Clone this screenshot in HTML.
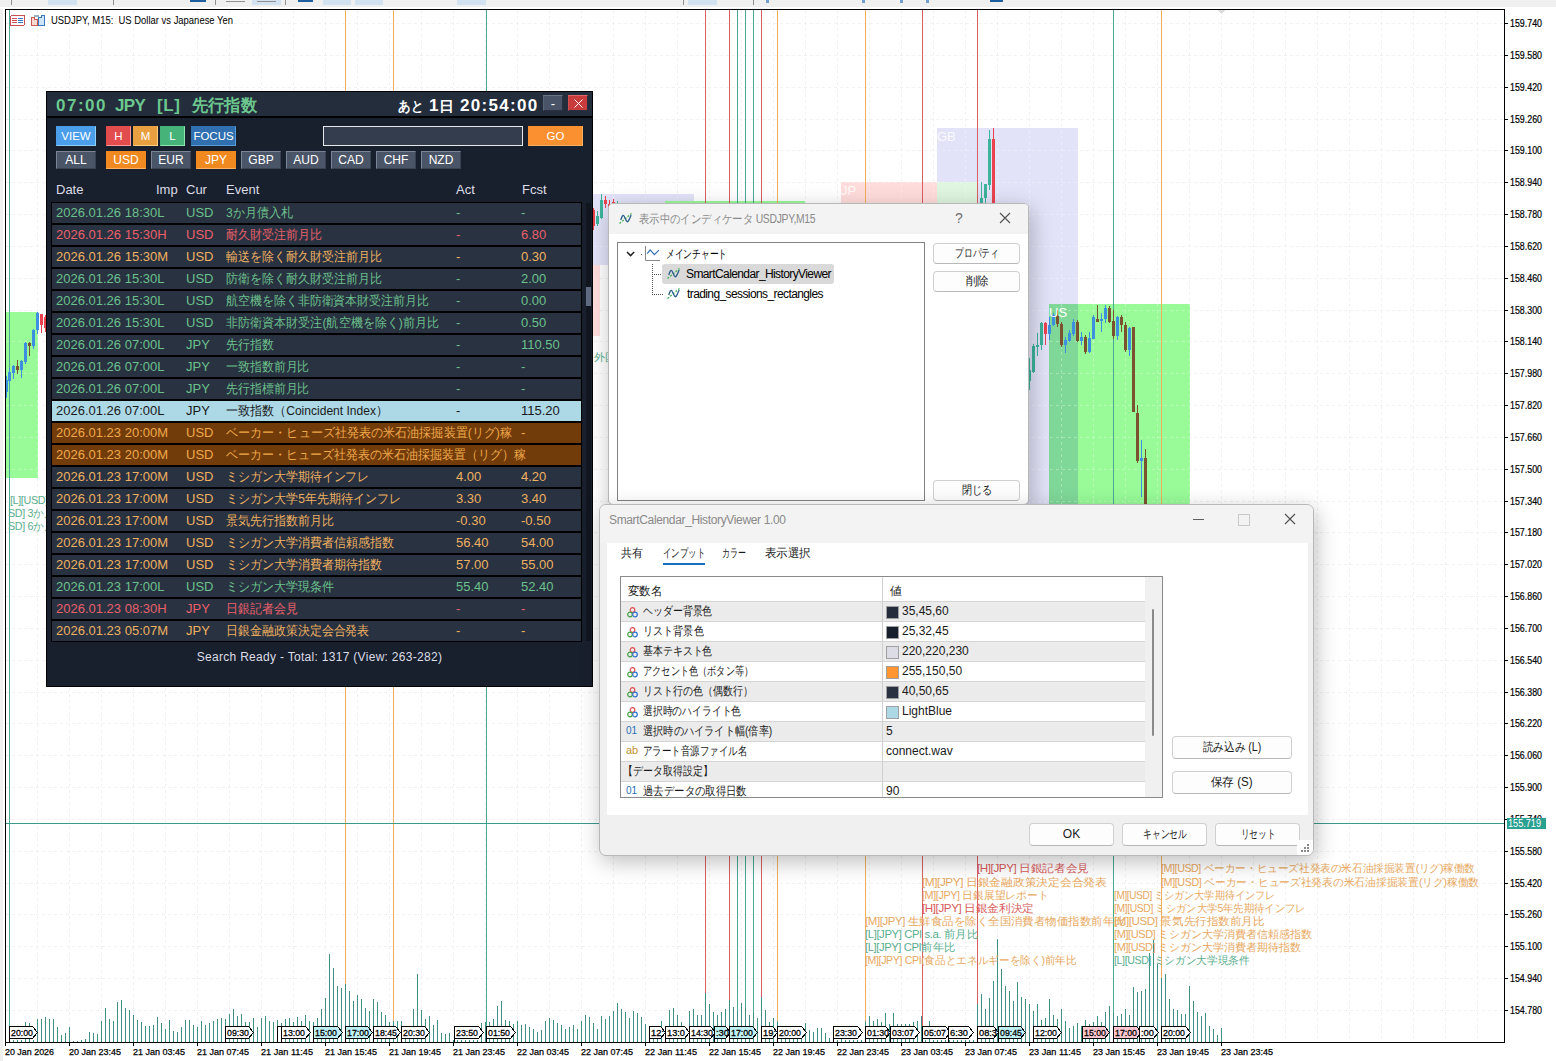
<!DOCTYPE html>
<html><head><meta charset="utf-8"><title>MT5</title><style>
html,body{margin:0;padding:0;width:1556px;height:1061px;overflow:hidden;background:#fff;}
body{position:relative;font-family:"Liberation Sans",sans-serif;}
.abs{position:absolute;}
#chart{position:absolute;left:0;top:0;}
#panel{position:absolute;left:46px;top:91px;width:545px;height:594px;background:#19202d;border:1px solid #000;overflow:hidden;}
#phead{position:absolute;left:0;top:0;width:545px;height:24px;background:#232d3c;border-bottom:2px solid #000;}
.ht{position:absolute;top:3px;font-size:17px;font-weight:bold;white-space:nowrap;line-height:22px;letter-spacing:0.6px;}
.pbtn{position:absolute;color:#fff;font-size:13px;text-align:center;line-height:15px;border-right:1px solid #2a3040;border-bottom:1px solid #2a3040;box-sizing:border-box;}
.btn{position:absolute;box-sizing:border-box;border:1px solid;color:#fff;font-size:11.5px;text-align:center;line-height:18px;white-space:nowrap;}
.cb{width:40px;height:18px;line-height:16px;background:#4b5568;border-color:#7a8598 #3a4252 #3a4252 #7a8598;font-size:12px;}
.sbox{position:absolute;box-sizing:border-box;border:1px solid #e8e8e8;background:#343d4e;}
.colh{position:absolute;top:90px;font-size:13px;color:#dcdce6;line-height:16px;}
.row{position:absolute;left:4px;width:529px;height:20px;border:1px solid #000;font-size:13px;line-height:20px;white-space:nowrap;overflow:hidden;}
.row > span{position:absolute;top:0;}
#sbar{position:absolute;left:539px;top:111px;width:5px;height:438px;background:#11161f;}
#sthumb{position:absolute;left:0;top:84px;width:5px;height:19px;background:#606a80;}
#status{position:absolute;left:0;width:545px;top:557px;text-align:center;font-size:12px;color:#dcdce6;line-height:16px;letter-spacing:0.3px;}
.dlg{position:absolute;box-sizing:border-box;background:#fff;border:1px solid #b8b8b8;border-radius:8px;box-shadow:2px 6px 22px rgba(0,0,0,0.26);overflow:hidden;}
#dlg1{left:608px;top:203px;width:421px;height:302px;border-radius:5px;}
#dlg2{left:599px;top:504px;width:715px;height:352px;background:#f0f0f0;border-radius:7px;}
.dtitle{position:absolute;left:0;top:0;width:100%;background:#f3f3f3;}
.dtt{position:absolute;font-size:12px;color:#8a8a8a;white-space:nowrap;line-height:16px;letter-spacing:-0.35px;}
.dico{position:absolute;line-height:0;}
.tree{position:absolute;box-sizing:border-box;border:1px solid #828282;background:#fff;}
.tt{position:absolute;font-size:12px;color:#000;white-space:nowrap;line-height:16px;letter-spacing:-0.6px;}
.wbtn{position:absolute;box-sizing:border-box;border:1px solid #d0d0d0;border-bottom-color:#b8b8b8;border-radius:4px;background:#fdfdfd;font-size:12px;text-align:center;color:#1a1a1a;white-space:nowrap;}
#dlg1 .wbtn{line-height:18px;}
#dlg2 .wbtn{line-height:21px;}
.tab{position:absolute;top:2px;font-size:12px;color:#1a1a1a;white-space:nowrap;line-height:16px;}
#ptable{position:absolute;left:13px;top:33px;width:543px;height:222px;box-sizing:border-box;border:1px solid #8a8a8a;background:#fff;overflow:hidden;}
.prow{position:absolute;left:0;width:524px;border-top:1px solid #d4d4d4;}
body.cjk .j{letter-spacing:0 !important;-webkit-text-stroke:0 !important;stroke-width:0 !important;}
.pt{font-size:12px;color:#1a1a1a;white-space:nowrap;line-height:19px;top:0;}
</style></head>
<body>
<svg id="chart" width="1556" height="1061" shape-rendering="crispEdges">
<rect x="0" y="0" width="1556" height="7" fill="#f0f0f0"/>
<rect x="0" y="0" width="3" height="1061" fill="#f0f0f0"/>
<rect x="0" y="7" width="1556" height="2" fill="#ffffff"/>
<rect x="48" y="0" width="29" height="5" fill="#d3e2f0"/>
<rect x="252" y="0" width="29" height="5" fill="#d3e2f0"/>
<rect x="323" y="0" width="28" height="5" fill="#d3e2f0"/>
<rect x="355" y="0" width="28" height="5" fill="#d3e2f0"/>
<rect x="457" y="0" width="29" height="5" fill="#d3e2f0"/>
<rect x="688" y="0" width="29" height="5" fill="#d3e2f0"/>
<rect x="11" y="0" width="1" height="5" fill="#909090"/>
<rect x="113" y="0" width="1" height="5" fill="#909090"/>
<rect x="215" y="0" width="1" height="5" fill="#909090"/>
<rect x="285" y="0" width="1" height="5" fill="#909090"/>
<rect x="683" y="0" width="1" height="5" fill="#909090"/>
<rect x="753" y="0" width="1" height="5" fill="#909090"/>
<rect x="190" y="0" width="16" height="2" fill="#1f5fa0"/>
<rect x="298" y="0" width="15" height="2" fill="#1f5fa0"/>
<rect x="990" y="0" width="13" height="2" fill="#1f5fa0"/>
<rect x="862" y="0" width="3" height="3" fill="#3a7ac0" opacity="0.7"/>
<rect x="900" y="0" width="3" height="3" fill="#3a7ac0" opacity="0.7"/>
<rect x="926" y="0" width="3" height="3" fill="#3a7ac0" opacity="0.7"/>
<rect x="766" y="0" width="3" height="3" fill="#3a7ac0" opacity="0.7"/>
<rect x="226" y="1" width="19" height="1" fill="#909090"/>
<rect x="257" y="1" width="19" height="1" fill="#909090"/>
<path d="M37.5 10V1042 M69.5 10V1042 M101.5 10V1042 M133.5 10V1042 M165.5 10V1042 M197.5 10V1042 M229.5 10V1042 M261.5 10V1042 M293.5 10V1042 M325.5 10V1042 M357.5 10V1042 M389.5 10V1042 M421.5 10V1042 M453.5 10V1042 M485.5 10V1042 M517.5 10V1042 M549.5 10V1042 M581.5 10V1042 M613.5 10V1042 M645.5 10V1042 M677.5 10V1042 M709.5 10V1042 M741.5 10V1042 M773.5 10V1042 M805.5 10V1042 M837.5 10V1042 M869.5 10V1042 M901.5 10V1042 M933.5 10V1042 M965.5 10V1042 M997.5 10V1042 M1029.5 10V1042 M1061.5 10V1042 M1093.5 10V1042 M1125.5 10V1042 M1157.5 10V1042 M1189.5 10V1042 M1221.5 10V1042 M1253.5 10V1042 M1285.5 10V1042 M1317.5 10V1042 M1349.5 10V1042 M1381.5 10V1042 M1413.5 10V1042 M1445.5 10V1042 M1477.5 10V1042 M6 23.5H1504 M6 55.5H1504 M6 87.5H1504 M6 119.5H1504 M6 150.5H1504 M6 182.5H1504 M6 214.5H1504 M6 246.5H1504 M6 278.5H1504 M6 310.5H1504 M6 341.5H1504 M6 373.5H1504 M6 405.5H1504 M6 437.5H1504 M6 469.5H1504 M6 501.5H1504 M6 532.5H1504 M6 564.5H1504 M6 596.5H1504 M6 628.5H1504 M6 660.5H1504 M6 692.5H1504 M6 723.5H1504 M6 755.5H1504 M6 787.5H1504 M6 819.5H1504 M6 851.5H1504 M6 883.5H1504 M6 914.5H1504 M6 946.5H1504 M6 978.5H1504 M6 1010.5H1504" stroke="#ebebeb" stroke-width="1" stroke-dasharray="3 3" fill="none"/>
<rect x="6" y="312" width="32" height="166" fill="#98fb98"/>
<rect x="593" y="194" width="101" height="71" fill="#e2e2f8"/>
<rect x="593" y="265" width="7" height="71" fill="#ffdede"/>
<rect x="665" y="201" width="140" height="199" fill="#98fb98"/>
<rect x="841" y="182" width="96" height="238" fill="#ffdcdc"/>
<rect x="937" y="128" width="141" height="572" fill="#e2e2f8"/>
<rect x="937" y="182" width="41" height="238" fill="#dff5df"/>
<rect x="1078" y="304" width="112" height="496" fill="#98fb98"/>
<rect x="1049" y="304" width="29" height="496" fill="#7fd898"/>
<path d="M37.5 10V1042 M69.5 10V1042 M101.5 10V1042 M133.5 10V1042 M165.5 10V1042 M197.5 10V1042 M229.5 10V1042 M261.5 10V1042 M293.5 10V1042 M325.5 10V1042 M357.5 10V1042 M389.5 10V1042 M421.5 10V1042 M453.5 10V1042 M485.5 10V1042 M517.5 10V1042 M549.5 10V1042 M581.5 10V1042 M613.5 10V1042 M645.5 10V1042 M677.5 10V1042 M709.5 10V1042 M741.5 10V1042 M773.5 10V1042 M805.5 10V1042 M837.5 10V1042 M869.5 10V1042 M901.5 10V1042 M933.5 10V1042 M965.5 10V1042 M997.5 10V1042 M1029.5 10V1042 M1061.5 10V1042 M1093.5 10V1042 M1125.5 10V1042 M1157.5 10V1042 M1189.5 10V1042 M1221.5 10V1042 M1253.5 10V1042 M1285.5 10V1042 M1317.5 10V1042 M1349.5 10V1042 M1381.5 10V1042 M1413.5 10V1042 M1445.5 10V1042 M1477.5 10V1042 M6 23.5H1504 M6 55.5H1504 M6 87.5H1504 M6 119.5H1504 M6 150.5H1504 M6 182.5H1504 M6 214.5H1504 M6 246.5H1504 M6 278.5H1504 M6 310.5H1504 M6 341.5H1504 M6 373.5H1504 M6 405.5H1504 M6 437.5H1504 M6 469.5H1504 M6 501.5H1504 M6 532.5H1504 M6 564.5H1504 M6 596.5H1504 M6 628.5H1504 M6 660.5H1504 M6 692.5H1504 M6 723.5H1504 M6 755.5H1504 M6 787.5H1504 M6 819.5H1504 M6 851.5H1504 M6 883.5H1504 M6 914.5H1504 M6 946.5H1504 M6 978.5H1504 M6 1010.5H1504" stroke="#ffffff" stroke-opacity="0.3" stroke-width="1" stroke-dasharray="3 3" fill="none"/>
<rect x="9" y="10" width="1" height="1032" fill="#4aa898"/>
<rect x="345" y="10" width="1" height="1032" fill="#f0b060"/>
<rect x="393" y="10" width="1" height="1032" fill="#f0b060"/>
<rect x="486" y="10" width="1" height="1032" fill="#4aa898"/>
<rect x="705" y="10" width="1" height="1032" fill="#d86060"/>
<rect x="729" y="10" width="1" height="1032" fill="#d86060"/>
<rect x="737" y="10" width="1" height="1032" fill="#4aa898"/>
<rect x="745" y="10" width="1" height="1032" fill="#4aa898"/>
<rect x="753" y="10" width="1" height="1032" fill="#4aa898"/>
<rect x="761" y="10" width="1" height="1032" fill="#d86060"/>
<rect x="777" y="10" width="1" height="1032" fill="#f0b060"/>
<rect x="865" y="10" width="1" height="1032" fill="#f0b060"/>
<rect x="922" y="10" width="1" height="1032" fill="#d86060"/>
<rect x="977" y="10" width="1" height="1032" fill="#d86060"/>
<rect x="1113" y="10" width="1" height="1032" fill="#4aa898"/>
<rect x="1161" y="10" width="1" height="1032" fill="#f0b060"/>
<path d="M13.5 1042V1040 M17.5 1042V1040 M21.5 1042V1040 M25.5 1042V1022 M29.5 1042V1023 M33.5 1042V1040 M37.5 1042V1019 M41.5 1042V1019 M45.5 1042V1017 M49.5 1042V1019 M53.5 1042V1019 M57.5 1042V1027 M61.5 1042V1035 M65.5 1042V1033 M69.5 1042V1027 M73.5 1042V1041 M77.5 1042V1041 M81.5 1042V1040 M85.5 1042V1039 M89.5 1042V1032 M93.5 1042V1033 M97.5 1042V1034 M101.5 1042V1021 M105.5 1042V1008 M109.5 1042V1019 M113.5 1042V1021 M117.5 1042V1002 M121.5 1042V1000 M125.5 1042V1008 M129.5 1042V1010 M133.5 1042V1015 M137.5 1042V1020 M141.5 1042V1022 M145.5 1042V1026 M149.5 1042V1026 M153.5 1042V1025 M157.5 1042V1017 M161.5 1042V1023 M165.5 1042V1029 M169.5 1042V1020 M173.5 1042V1031 M177.5 1042V1032 M181.5 1042V1027 M185.5 1042V1020 M189.5 1042V1020 M193.5 1042V1025 M197.5 1042V1027 M201.5 1042V1021 M205.5 1042V1025 M209.5 1042V1023 M213.5 1042V1021 M217.5 1042V1019 M221.5 1042V1018 M225.5 1042V1019 M229.5 1042V1014 M233.5 1042V1009 M237.5 1042V1016 M241.5 1042V1014 M245.5 1042V1022 M249.5 1042V1022 M253.5 1042V1018 M257.5 1042V1027 M261.5 1042V1018 M265.5 1042V1016 M269.5 1042V1021 M273.5 1042V1022 M277.5 1042V1020 M281.5 1042V1023 M285.5 1042V1019 M289.5 1042V1018 M293.5 1042V1022 M297.5 1042V1017 M301.5 1042V1021 M305.5 1042V1015 M309.5 1042V1021 M313.5 1042V1022 M317.5 1042V1018 M321.5 1042V1009 M325.5 1042V998 M329.5 1042V954 M333.5 1042V968 M337.5 1042V986 M341.5 1042V988 M345.5 1042V984 M349.5 1042V991 M353.5 1042V1001 M357.5 1042V995 M361.5 1042V999 M365.5 1042V1008 M369.5 1042V1011 M373.5 1042V999 M377.5 1042V1002 M381.5 1042V1012 M385.5 1042V1015 M389.5 1042V1022 M393.5 1042V1021 M397.5 1042V1021 M401.5 1042V1021 M405.5 1042V1030 M409.5 1042V1030 M413.5 1042V1009 M417.5 1042V974 M421.5 1042V1010 M425.5 1042V1019 M429.5 1042V1016 M433.5 1042V1025 M437.5 1042V1020 M441.5 1042V1033 M445.5 1042V1034 M449.5 1042V1033 M453.5 1042V1040 M457.5 1042V1040 M461.5 1042V1040 M465.5 1042V1040 M469.5 1042V1040 M473.5 1042V1040 M477.5 1042V1040 M481.5 1042V1023 M485.5 1042V1022 M489.5 1042V1022 M493.5 1042V1019 M497.5 1042V1006 M501.5 1042V1001 M505.5 1042V1020 M509.5 1042V1021 M513.5 1042V1024 M517.5 1042V1021 M521.5 1042V1025 M525.5 1042V1024 M529.5 1042V1027 M533.5 1042V1029 M537.5 1042V1032 M541.5 1042V1030 M545.5 1042V1021 M549.5 1042V1018 M553.5 1042V1020 M557.5 1042V1023 M561.5 1042V1025 M565.5 1042V1029 M569.5 1042V1027 M573.5 1042V1025 M577.5 1042V1029 M581.5 1042V1021 M585.5 1042V1015 M589.5 1042V1017 M593.5 1042V1023 M597.5 1042V1029 M601.5 1042V1016 M605.5 1042V1019 M609.5 1042V1016 M613.5 1042V1011 M617.5 1042V1003 M621.5 1042V1009 M625.5 1042V1012 M629.5 1042V1018 M633.5 1042V1011 M637.5 1042V1013 M641.5 1042V1017 M645.5 1042V1024 M649.5 1042V1030 M653.5 1042V1035 M657.5 1042V1030 M661.5 1042V1021 M665.5 1042V1035 M669.5 1042V1010 M673.5 1042V1008 M677.5 1042V1015 M681.5 1042V1022 M685.5 1042V1035 M689.5 1042V1011 M693.5 1042V1009 M697.5 1042V1015 M701.5 1042V1015 M705.5 1042V993 M709.5 1042V1004 M713.5 1042V1012 M717.5 1042V1015 M721.5 1042V1012 M725.5 1042V1009 M729.5 1042V1000 M733.5 1042V1007 M737.5 1042V1011 M741.5 1042V1003 M745.5 1042V1007 M749.5 1042V1015 M753.5 1042V1013 M757.5 1042V1018 M761.5 1042V997 M765.5 1042V1010 M769.5 1042V1022 M773.5 1042V1018 M777.5 1042V1021 M781.5 1042V1036 M785.5 1042V1038 M789.5 1042V1036 M793.5 1042V1038 M797.5 1042V1037 M801.5 1042V1030 M805.5 1042V1023 M809.5 1042V1030 M813.5 1042V1032 M817.5 1042V1028 M821.5 1042V1028 M825.5 1042V1033 M829.5 1042V1038 M833.5 1042V1040 M837.5 1042V1040 M841.5 1042V1039 M845.5 1042V1040 M849.5 1042V1040 M853.5 1042V1040 M857.5 1042V1040 M861.5 1042V1040 M865.5 1042V1021 M869.5 1042V1016 M873.5 1042V1021 M877.5 1042V1019 M881.5 1042V1022 M885.5 1042V1013 M889.5 1042V1024 M893.5 1042V1013 M897.5 1042V1024 M901.5 1042V1024 M905.5 1042V1024 M909.5 1042V1024 M913.5 1042V1022 M917.5 1042V1021 M921.5 1042V1016 M925.5 1042V1040 M929.5 1042V1021 M933.5 1042V1040 M937.5 1042V1040 M941.5 1042V1040 M945.5 1042V1040 M949.5 1042V1040 M953.5 1042V1040 M957.5 1042V1040 M961.5 1042V1040 M965.5 1042V1040 M969.5 1042V1040 M973.5 1042V1040 M977.5 1042V1004 M981.5 1042V994 M985.5 1042V1009 M989.5 1042V998 M993.5 1042V981 M997.5 1042V939 M1001.5 1042V969 M1005.5 1042V986 M1009.5 1042V991 M1013.5 1042V1001 M1017.5 1042V982 M1021.5 1042V997 M1025.5 1042V999 M1029.5 1042V1004 M1033.5 1042V1011 M1037.5 1042V1004 M1041.5 1042V1020 M1045.5 1042V1018 M1049.5 1042V999 M1053.5 1042V1015 M1057.5 1042V1019 M1061.5 1042V1009 M1065.5 1042V1021 M1069.5 1042V1028 M1073.5 1042V1026 M1077.5 1042V1023 M1081.5 1042V1026 M1085.5 1042V1020 M1089.5 1042V1024 M1093.5 1042V1022 M1097.5 1042V1016 M1101.5 1042V1022 M1105.5 1042V1012 M1109.5 1042V1006 M1113.5 1042V1013 M1117.5 1042V1016 M1121.5 1042V1014 M1125.5 1042V1009 M1129.5 1042V1015 M1133.5 1042V987 M1137.5 1042V992 M1141.5 1042V991 M1145.5 1042V989 M1149.5 1042V953 M1153.5 1042V940 M1157.5 1042V964 M1161.5 1042V978 M1165.5 1042V974 M1169.5 1042V999 M1173.5 1042V1009 M1177.5 1042V1010 M1181.5 1042V1014 M1185.5 1042V1014 M1189.5 1042V986 M1193.5 1042V1001 M1197.5 1042V1012 M1201.5 1042V1016 M1205.5 1042V1013 M1209.5 1042V1026 M1213.5 1042V1029 M1217.5 1042V1035 M1221.5 1042V1028" stroke="#3f8f86" stroke-width="1" fill="none"/>
<rect x="6" y="376" width="1" height="22" fill="#3d8fe0"/>
<rect x="5" y="380" width="3" height="12" fill="#3d8fe0"/>
<rect x="9" y="368" width="1" height="17" fill="#3d8fe0"/>
<rect x="8" y="372" width="3" height="9" fill="#3d8fe0"/>
<rect x="13" y="365" width="1" height="14" fill="#3d8fe0"/>
<rect x="12" y="366" width="3" height="7" fill="#3d8fe0"/>
<rect x="17" y="360" width="1" height="14" fill="#7a5230"/>
<rect x="16" y="366" width="3" height="4" fill="#7a5230"/>
<rect x="21" y="360" width="1" height="18" fill="#3d8fe0"/>
<rect x="20" y="361" width="3" height="9" fill="#3d8fe0"/>
<rect x="25" y="342" width="1" height="22" fill="#3d8fe0"/>
<rect x="24" y="343" width="3" height="19" fill="#3d8fe0"/>
<rect x="29" y="342" width="1" height="14" fill="#7a5230"/>
<rect x="28" y="343" width="3" height="3" fill="#7a5230"/>
<rect x="33" y="329" width="1" height="20" fill="#3d8fe0"/>
<rect x="32" y="330" width="3" height="16" fill="#3d8fe0"/>
<rect x="37" y="312" width="1" height="22" fill="#3d8fe0"/>
<rect x="36" y="313" width="3" height="17" fill="#3d8fe0"/>
<rect x="41" y="314" width="1" height="19" fill="#e8434f"/>
<rect x="40" y="314" width="3" height="11" fill="#e8434f"/>
<rect x="45" y="315" width="1" height="17" fill="#e8434f"/>
<rect x="44" y="317" width="3" height="11" fill="#e8434f"/>
<rect x="593" y="208" width="1" height="22" fill="#e8434f"/>
<rect x="592" y="210" width="3" height="16" fill="#e8434f"/>
<rect x="597" y="211" width="1" height="15" fill="#3cb39a"/>
<rect x="596" y="216" width="3" height="8" fill="#3cb39a"/>
<rect x="601" y="194" width="1" height="25" fill="#3cb39a"/>
<rect x="600" y="200" width="3" height="18" fill="#3cb39a"/>
<rect x="605" y="196" width="1" height="12" fill="#e8434f"/>
<rect x="604" y="200" width="3" height="4" fill="#e8434f"/>
<rect x="609" y="200" width="1" height="9" fill="#e8434f"/>
<rect x="608" y="204" width="3" height="4" fill="#e8434f"/>
<rect x="613" y="199" width="1" height="6" fill="#e8434f"/>
<rect x="612" y="202" width="3" height="2" fill="#e8434f"/>
<rect x="617" y="201" width="1" height="4" fill="#3cb39a"/>
<rect x="616" y="203" width="3" height="1" fill="#3cb39a"/>
<rect x="981" y="182" width="1" height="24" fill="#3cb39a"/>
<rect x="980" y="198" width="3" height="8" fill="#3cb39a"/>
<rect x="985" y="184" width="1" height="22" fill="#3cb39a"/>
<rect x="984" y="184" width="3" height="14" fill="#3cb39a"/>
<rect x="989" y="130" width="1" height="60" fill="#3cb39a"/>
<rect x="988" y="139" width="3" height="46" fill="#3cb39a"/>
<rect x="993" y="128" width="1" height="82" fill="#e8434f"/>
<rect x="992" y="139" width="3" height="71" fill="#e8434f"/>
<rect x="1029" y="358" width="1" height="32" fill="#3cb39a"/>
<rect x="1028" y="370" width="3" height="11" fill="#3cb39a"/>
<rect x="1033" y="344" width="1" height="29" fill="#3cb39a"/>
<rect x="1032" y="346" width="3" height="26" fill="#3cb39a"/>
<rect x="1037" y="333" width="1" height="23" fill="#3cb39a"/>
<rect x="1036" y="345" width="3" height="2" fill="#3cb39a"/>
<rect x="1041" y="322" width="1" height="28" fill="#3cb39a"/>
<rect x="1040" y="323" width="3" height="22" fill="#3cb39a"/>
<rect x="1045" y="322" width="1" height="23" fill="#e8434f"/>
<rect x="1044" y="323" width="3" height="11" fill="#e8434f"/>
<rect x="1049" y="317" width="1" height="23" fill="#3d8fe0"/>
<rect x="1048" y="325" width="3" height="9" fill="#3d8fe0"/>
<rect x="1053" y="313" width="1" height="13" fill="#3d8fe0"/>
<rect x="1052" y="315" width="3" height="10" fill="#3d8fe0"/>
<rect x="1057" y="310" width="1" height="17" fill="#7a5230"/>
<rect x="1056" y="316" width="3" height="8" fill="#7a5230"/>
<rect x="1061" y="322" width="1" height="25" fill="#7a5230"/>
<rect x="1060" y="324" width="3" height="21" fill="#7a5230"/>
<rect x="1065" y="337" width="1" height="16" fill="#3d8fe0"/>
<rect x="1064" y="340" width="3" height="5" fill="#3d8fe0"/>
<rect x="1069" y="330" width="1" height="12" fill="#3d8fe0"/>
<rect x="1068" y="333" width="3" height="8" fill="#3d8fe0"/>
<rect x="1073" y="319" width="1" height="17" fill="#3d8fe0"/>
<rect x="1072" y="322" width="3" height="12" fill="#3d8fe0"/>
<rect x="1077" y="320" width="1" height="22" fill="#7a5230"/>
<rect x="1076" y="322" width="3" height="19" fill="#7a5230"/>
<rect x="1081" y="332" width="1" height="13" fill="#3d8fe0"/>
<rect x="1080" y="337" width="3" height="4" fill="#3d8fe0"/>
<rect x="1085" y="335" width="1" height="19" fill="#7a5230"/>
<rect x="1084" y="337" width="3" height="15" fill="#7a5230"/>
<rect x="1089" y="332" width="1" height="21" fill="#3d8fe0"/>
<rect x="1088" y="338" width="3" height="14" fill="#3d8fe0"/>
<rect x="1093" y="315" width="1" height="24" fill="#3d8fe0"/>
<rect x="1092" y="317" width="3" height="22" fill="#3d8fe0"/>
<rect x="1097" y="305" width="1" height="17" fill="#7a5230"/>
<rect x="1096" y="319" width="3" height="3" fill="#7a5230"/>
<rect x="1101" y="313" width="1" height="19" fill="#3d8fe0"/>
<rect x="1100" y="319" width="3" height="2" fill="#3d8fe0"/>
<rect x="1105" y="305" width="1" height="18" fill="#3d8fe0"/>
<rect x="1104" y="308" width="3" height="11" fill="#3d8fe0"/>
<rect x="1109" y="306" width="1" height="17" fill="#7a5230"/>
<rect x="1108" y="308" width="3" height="14" fill="#7a5230"/>
<rect x="1113" y="310" width="1" height="29" fill="#7a5230"/>
<rect x="1112" y="321" width="3" height="15" fill="#7a5230"/>
<rect x="1117" y="316" width="1" height="24" fill="#3d8fe0"/>
<rect x="1116" y="317" width="3" height="19" fill="#3d8fe0"/>
<rect x="1121" y="315" width="1" height="17" fill="#7a5230"/>
<rect x="1120" y="317" width="3" height="8" fill="#7a5230"/>
<rect x="1125" y="322" width="1" height="30" fill="#7a5230"/>
<rect x="1124" y="325" width="3" height="25" fill="#7a5230"/>
<rect x="1129" y="327" width="1" height="29" fill="#3d8fe0"/>
<rect x="1128" y="328" width="3" height="22" fill="#3d8fe0"/>
<rect x="1133" y="327" width="1" height="85" fill="#7a5230"/>
<rect x="1132" y="327" width="3" height="85" fill="#7a5230"/>
<rect x="1137" y="405" width="1" height="58" fill="#7a5230"/>
<rect x="1136" y="413" width="3" height="48" fill="#7a5230"/>
<rect x="1141" y="440" width="1" height="57" fill="#3d8fe0"/>
<rect x="1140" y="458" width="3" height="3" fill="#3d8fe0"/>
<rect x="1145" y="449" width="1" height="71" fill="#7a5230"/>
<rect x="1144" y="458" width="3" height="62" fill="#7a5230"/>
<text x="937" y="141" font-family='"Liberation Sans", sans-serif' font-size="13" fill="#ffffff" opacity="0.85">GB</text>
<text x="841" y="195" font-family='"Liberation Sans", sans-serif' font-size="13" fill="#ffffff" opacity="0.85">JP</text>
<text x="1049" y="317" font-family='"Liberation Sans", sans-serif' font-size="13" fill="#ffffff">US</text>
<rect x="5" y="823" width="1499" height="1" fill="#3a9a8c"/>
<rect x="5.5" y="9.5" width="1499" height="1033" fill="none" stroke="#000" stroke-width="1"/>
<rect x="1504" y="23" width="4" height="1" fill="#000"/>
<text x="1510" y="27" font-family='"Liberation Sans", sans-serif' font-size="10" fill="#000" textLength="32" lengthAdjust="spacingAndGlyphs" stroke="#000" stroke-width="0.2">159.740</text>
<rect x="1504" y="55" width="4" height="1" fill="#000"/>
<text x="1510" y="59" font-family='"Liberation Sans", sans-serif' font-size="10" fill="#000" textLength="32" lengthAdjust="spacingAndGlyphs" stroke="#000" stroke-width="0.2">159.580</text>
<rect x="1504" y="87" width="4" height="1" fill="#000"/>
<text x="1510" y="91" font-family='"Liberation Sans", sans-serif' font-size="10" fill="#000" textLength="32" lengthAdjust="spacingAndGlyphs" stroke="#000" stroke-width="0.2">159.420</text>
<rect x="1504" y="119" width="4" height="1" fill="#000"/>
<text x="1510" y="123" font-family='"Liberation Sans", sans-serif' font-size="10" fill="#000" textLength="32" lengthAdjust="spacingAndGlyphs" stroke="#000" stroke-width="0.2">159.260</text>
<rect x="1504" y="150" width="4" height="1" fill="#000"/>
<text x="1510" y="154" font-family='"Liberation Sans", sans-serif' font-size="10" fill="#000" textLength="32" lengthAdjust="spacingAndGlyphs" stroke="#000" stroke-width="0.2">159.100</text>
<rect x="1504" y="182" width="4" height="1" fill="#000"/>
<text x="1510" y="186" font-family='"Liberation Sans", sans-serif' font-size="10" fill="#000" textLength="32" lengthAdjust="spacingAndGlyphs" stroke="#000" stroke-width="0.2">158.940</text>
<rect x="1504" y="214" width="4" height="1" fill="#000"/>
<text x="1510" y="218" font-family='"Liberation Sans", sans-serif' font-size="10" fill="#000" textLength="32" lengthAdjust="spacingAndGlyphs" stroke="#000" stroke-width="0.2">158.780</text>
<rect x="1504" y="246" width="4" height="1" fill="#000"/>
<text x="1510" y="250" font-family='"Liberation Sans", sans-serif' font-size="10" fill="#000" textLength="32" lengthAdjust="spacingAndGlyphs" stroke="#000" stroke-width="0.2">158.620</text>
<rect x="1504" y="278" width="4" height="1" fill="#000"/>
<text x="1510" y="282" font-family='"Liberation Sans", sans-serif' font-size="10" fill="#000" textLength="32" lengthAdjust="spacingAndGlyphs" stroke="#000" stroke-width="0.2">158.460</text>
<rect x="1504" y="310" width="4" height="1" fill="#000"/>
<text x="1510" y="314" font-family='"Liberation Sans", sans-serif' font-size="10" fill="#000" textLength="32" lengthAdjust="spacingAndGlyphs" stroke="#000" stroke-width="0.2">158.300</text>
<rect x="1504" y="341" width="4" height="1" fill="#000"/>
<text x="1510" y="345" font-family='"Liberation Sans", sans-serif' font-size="10" fill="#000" textLength="32" lengthAdjust="spacingAndGlyphs" stroke="#000" stroke-width="0.2">158.140</text>
<rect x="1504" y="373" width="4" height="1" fill="#000"/>
<text x="1510" y="377" font-family='"Liberation Sans", sans-serif' font-size="10" fill="#000" textLength="32" lengthAdjust="spacingAndGlyphs" stroke="#000" stroke-width="0.2">157.980</text>
<rect x="1504" y="405" width="4" height="1" fill="#000"/>
<text x="1510" y="409" font-family='"Liberation Sans", sans-serif' font-size="10" fill="#000" textLength="32" lengthAdjust="spacingAndGlyphs" stroke="#000" stroke-width="0.2">157.820</text>
<rect x="1504" y="437" width="4" height="1" fill="#000"/>
<text x="1510" y="441" font-family='"Liberation Sans", sans-serif' font-size="10" fill="#000" textLength="32" lengthAdjust="spacingAndGlyphs" stroke="#000" stroke-width="0.2">157.660</text>
<rect x="1504" y="469" width="4" height="1" fill="#000"/>
<text x="1510" y="473" font-family='"Liberation Sans", sans-serif' font-size="10" fill="#000" textLength="32" lengthAdjust="spacingAndGlyphs" stroke="#000" stroke-width="0.2">157.500</text>
<rect x="1504" y="501" width="4" height="1" fill="#000"/>
<text x="1510" y="505" font-family='"Liberation Sans", sans-serif' font-size="10" fill="#000" textLength="32" lengthAdjust="spacingAndGlyphs" stroke="#000" stroke-width="0.2">157.340</text>
<rect x="1504" y="532" width="4" height="1" fill="#000"/>
<text x="1510" y="536" font-family='"Liberation Sans", sans-serif' font-size="10" fill="#000" textLength="32" lengthAdjust="spacingAndGlyphs" stroke="#000" stroke-width="0.2">157.180</text>
<rect x="1504" y="564" width="4" height="1" fill="#000"/>
<text x="1510" y="568" font-family='"Liberation Sans", sans-serif' font-size="10" fill="#000" textLength="32" lengthAdjust="spacingAndGlyphs" stroke="#000" stroke-width="0.2">157.020</text>
<rect x="1504" y="596" width="4" height="1" fill="#000"/>
<text x="1510" y="600" font-family='"Liberation Sans", sans-serif' font-size="10" fill="#000" textLength="32" lengthAdjust="spacingAndGlyphs" stroke="#000" stroke-width="0.2">156.860</text>
<rect x="1504" y="628" width="4" height="1" fill="#000"/>
<text x="1510" y="632" font-family='"Liberation Sans", sans-serif' font-size="10" fill="#000" textLength="32" lengthAdjust="spacingAndGlyphs" stroke="#000" stroke-width="0.2">156.700</text>
<rect x="1504" y="660" width="4" height="1" fill="#000"/>
<text x="1510" y="664" font-family='"Liberation Sans", sans-serif' font-size="10" fill="#000" textLength="32" lengthAdjust="spacingAndGlyphs" stroke="#000" stroke-width="0.2">156.540</text>
<rect x="1504" y="692" width="4" height="1" fill="#000"/>
<text x="1510" y="696" font-family='"Liberation Sans", sans-serif' font-size="10" fill="#000" textLength="32" lengthAdjust="spacingAndGlyphs" stroke="#000" stroke-width="0.2">156.380</text>
<rect x="1504" y="723" width="4" height="1" fill="#000"/>
<text x="1510" y="727" font-family='"Liberation Sans", sans-serif' font-size="10" fill="#000" textLength="32" lengthAdjust="spacingAndGlyphs" stroke="#000" stroke-width="0.2">156.220</text>
<rect x="1504" y="755" width="4" height="1" fill="#000"/>
<text x="1510" y="759" font-family='"Liberation Sans", sans-serif' font-size="10" fill="#000" textLength="32" lengthAdjust="spacingAndGlyphs" stroke="#000" stroke-width="0.2">156.060</text>
<rect x="1504" y="787" width="4" height="1" fill="#000"/>
<text x="1510" y="791" font-family='"Liberation Sans", sans-serif' font-size="10" fill="#000" textLength="32" lengthAdjust="spacingAndGlyphs" stroke="#000" stroke-width="0.2">155.900</text>
<rect x="1504" y="819" width="4" height="1" fill="#000"/>
<text x="1510" y="823" font-family='"Liberation Sans", sans-serif' font-size="10" fill="#000" textLength="32" lengthAdjust="spacingAndGlyphs" stroke="#000" stroke-width="0.2">155.740</text>
<rect x="1504" y="851" width="4" height="1" fill="#000"/>
<text x="1510" y="855" font-family='"Liberation Sans", sans-serif' font-size="10" fill="#000" textLength="32" lengthAdjust="spacingAndGlyphs" stroke="#000" stroke-width="0.2">155.580</text>
<rect x="1504" y="883" width="4" height="1" fill="#000"/>
<text x="1510" y="887" font-family='"Liberation Sans", sans-serif' font-size="10" fill="#000" textLength="32" lengthAdjust="spacingAndGlyphs" stroke="#000" stroke-width="0.2">155.420</text>
<rect x="1504" y="914" width="4" height="1" fill="#000"/>
<text x="1510" y="918" font-family='"Liberation Sans", sans-serif' font-size="10" fill="#000" textLength="32" lengthAdjust="spacingAndGlyphs" stroke="#000" stroke-width="0.2">155.260</text>
<rect x="1504" y="946" width="4" height="1" fill="#000"/>
<text x="1510" y="950" font-family='"Liberation Sans", sans-serif' font-size="10" fill="#000" textLength="32" lengthAdjust="spacingAndGlyphs" stroke="#000" stroke-width="0.2">155.100</text>
<rect x="1504" y="978" width="4" height="1" fill="#000"/>
<text x="1510" y="982" font-family='"Liberation Sans", sans-serif' font-size="10" fill="#000" textLength="32" lengthAdjust="spacingAndGlyphs" stroke="#000" stroke-width="0.2">154.940</text>
<rect x="1504" y="1010" width="4" height="1" fill="#000"/>
<text x="1510" y="1014" font-family='"Liberation Sans", sans-serif' font-size="10" fill="#000" textLength="32" lengthAdjust="spacingAndGlyphs" stroke="#000" stroke-width="0.2">154.780</text>
<rect x="1507" y="818" width="39" height="11" fill="#2aa090"/>
<text x="1508" y="827" font-family='"Liberation Sans", sans-serif' font-size="10" fill="#fff" textLength="33" lengthAdjust="spacingAndGlyphs">155.719</text>
<rect x="5" y="1042" width="1" height="4" fill="#000"/>
<text x="5" y="1055" font-family='"Liberation Sans", sans-serif' font-size="9.5" fill="#000" textLength="49" lengthAdjust="spacingAndGlyphs" stroke="#000" stroke-width="0.25">20 Jan 2026</text>
<rect x="69" y="1042" width="1" height="4" fill="#000"/>
<text x="69" y="1055" font-family='"Liberation Sans", sans-serif' font-size="9.5" fill="#000" textLength="52" lengthAdjust="spacingAndGlyphs" stroke="#000" stroke-width="0.25">20 Jan 23:45</text>
<rect x="133" y="1042" width="1" height="4" fill="#000"/>
<text x="133" y="1055" font-family='"Liberation Sans", sans-serif' font-size="9.5" fill="#000" textLength="52" lengthAdjust="spacingAndGlyphs" stroke="#000" stroke-width="0.25">21 Jan 03:45</text>
<rect x="197" y="1042" width="1" height="4" fill="#000"/>
<text x="197" y="1055" font-family='"Liberation Sans", sans-serif' font-size="9.5" fill="#000" textLength="52" lengthAdjust="spacingAndGlyphs" stroke="#000" stroke-width="0.25">21 Jan 07:45</text>
<rect x="261" y="1042" width="1" height="4" fill="#000"/>
<text x="261" y="1055" font-family='"Liberation Sans", sans-serif' font-size="9.5" fill="#000" textLength="52" lengthAdjust="spacingAndGlyphs" stroke="#000" stroke-width="0.25">21 Jan 11:45</text>
<rect x="325" y="1042" width="1" height="4" fill="#000"/>
<text x="325" y="1055" font-family='"Liberation Sans", sans-serif' font-size="9.5" fill="#000" textLength="52" lengthAdjust="spacingAndGlyphs" stroke="#000" stroke-width="0.25">21 Jan 15:45</text>
<rect x="389" y="1042" width="1" height="4" fill="#000"/>
<text x="389" y="1055" font-family='"Liberation Sans", sans-serif' font-size="9.5" fill="#000" textLength="52" lengthAdjust="spacingAndGlyphs" stroke="#000" stroke-width="0.25">21 Jan 19:45</text>
<rect x="453" y="1042" width="1" height="4" fill="#000"/>
<text x="453" y="1055" font-family='"Liberation Sans", sans-serif' font-size="9.5" fill="#000" textLength="52" lengthAdjust="spacingAndGlyphs" stroke="#000" stroke-width="0.25">21 Jan 23:45</text>
<rect x="517" y="1042" width="1" height="4" fill="#000"/>
<text x="517" y="1055" font-family='"Liberation Sans", sans-serif' font-size="9.5" fill="#000" textLength="52" lengthAdjust="spacingAndGlyphs" stroke="#000" stroke-width="0.25">22 Jan 03:45</text>
<rect x="581" y="1042" width="1" height="4" fill="#000"/>
<text x="581" y="1055" font-family='"Liberation Sans", sans-serif' font-size="9.5" fill="#000" textLength="52" lengthAdjust="spacingAndGlyphs" stroke="#000" stroke-width="0.25">22 Jan 07:45</text>
<rect x="645" y="1042" width="1" height="4" fill="#000"/>
<text x="645" y="1055" font-family='"Liberation Sans", sans-serif' font-size="9.5" fill="#000" textLength="52" lengthAdjust="spacingAndGlyphs" stroke="#000" stroke-width="0.25">22 Jan 11:45</text>
<rect x="709" y="1042" width="1" height="4" fill="#000"/>
<text x="709" y="1055" font-family='"Liberation Sans", sans-serif' font-size="9.5" fill="#000" textLength="52" lengthAdjust="spacingAndGlyphs" stroke="#000" stroke-width="0.25">22 Jan 15:45</text>
<rect x="773" y="1042" width="1" height="4" fill="#000"/>
<text x="773" y="1055" font-family='"Liberation Sans", sans-serif' font-size="9.5" fill="#000" textLength="52" lengthAdjust="spacingAndGlyphs" stroke="#000" stroke-width="0.25">22 Jan 19:45</text>
<rect x="837" y="1042" width="1" height="4" fill="#000"/>
<text x="837" y="1055" font-family='"Liberation Sans", sans-serif' font-size="9.5" fill="#000" textLength="52" lengthAdjust="spacingAndGlyphs" stroke="#000" stroke-width="0.25">22 Jan 23:45</text>
<rect x="901" y="1042" width="1" height="4" fill="#000"/>
<text x="901" y="1055" font-family='"Liberation Sans", sans-serif' font-size="9.5" fill="#000" textLength="52" lengthAdjust="spacingAndGlyphs" stroke="#000" stroke-width="0.25">23 Jan 03:45</text>
<rect x="965" y="1042" width="1" height="4" fill="#000"/>
<text x="965" y="1055" font-family='"Liberation Sans", sans-serif' font-size="9.5" fill="#000" textLength="52" lengthAdjust="spacingAndGlyphs" stroke="#000" stroke-width="0.25">23 Jan 07:45</text>
<rect x="1029" y="1042" width="1" height="4" fill="#000"/>
<text x="1029" y="1055" font-family='"Liberation Sans", sans-serif' font-size="9.5" fill="#000" textLength="52" lengthAdjust="spacingAndGlyphs" stroke="#000" stroke-width="0.25">23 Jan 11:45</text>
<rect x="1093" y="1042" width="1" height="4" fill="#000"/>
<text x="1093" y="1055" font-family='"Liberation Sans", sans-serif' font-size="9.5" fill="#000" textLength="52" lengthAdjust="spacingAndGlyphs" stroke="#000" stroke-width="0.25">23 Jan 15:45</text>
<rect x="1157" y="1042" width="1" height="4" fill="#000"/>
<text x="1157" y="1055" font-family='"Liberation Sans", sans-serif' font-size="9.5" fill="#000" textLength="52" lengthAdjust="spacingAndGlyphs" stroke="#000" stroke-width="0.25">23 Jan 19:45</text>
<rect x="1221" y="1042" width="1" height="4" fill="#000"/>
<text x="1221" y="1055" font-family='"Liberation Sans", sans-serif' font-size="9.5" fill="#000" textLength="52" lengthAdjust="spacingAndGlyphs" stroke="#000" stroke-width="0.25">23 Jan 23:45</text>
<path d="M1217 10 L1225 10 L1221 14 Z" fill="#dcdcdc"/>
<path d="M9.5 1042 V1026.5 H32.5 L37.5 1032.5 L32.5 1038.5 H9.5" fill="#fff" stroke="#000" stroke-width="1"/>
<text x="11" y="1036" font-family='"Liberation Sans", sans-serif' font-size="9.5" fill="#000" textLength="22" lengthAdjust="spacingAndGlyphs" stroke="#000" stroke-width="0.3">20:00</text>
<path d="M225.5 1042 V1026.5 H248.5 L253.5 1032.5 L248.5 1038.5 H225.5" fill="#fff" stroke="#000" stroke-width="1"/>
<text x="227" y="1036" font-family='"Liberation Sans", sans-serif' font-size="9.5" fill="#000" textLength="22" lengthAdjust="spacingAndGlyphs" stroke="#000" stroke-width="0.3">09:30</text>
<path d="M280.5 1026.5H277.5V1042" stroke="#000" fill="none"/>
<path d="M281.5 1042 V1026.5 H305.5 L310.5 1032.5 L305.5 1038.5 H281.5" fill="#fff" stroke="#000" stroke-width="1"/>
<text x="283" y="1036" font-family='"Liberation Sans", sans-serif' font-size="9.5" fill="#000" textLength="22" lengthAdjust="spacingAndGlyphs" stroke="#000" stroke-width="0.3">13:00</text>
<path d="M313.5 1042 V1026.5 H337.5 L342.5 1032.5 L337.5 1038.5 H313.5" fill="#bff0f4" stroke="#000" stroke-width="1"/>
<text x="315" y="1036" font-family='"Liberation Sans", sans-serif' font-size="9.5" fill="#000" textLength="22" lengthAdjust="spacingAndGlyphs" stroke="#000" stroke-width="0.3">15:00</text>
<path d="M345.5 1042 V1026.5 H367.5 L372.5 1032.5 L367.5 1038.5 H345.5" fill="#bff0f4" stroke="#000" stroke-width="1"/>
<text x="347" y="1036" font-family='"Liberation Sans", sans-serif' font-size="9.5" fill="#000" textLength="22" lengthAdjust="spacingAndGlyphs" stroke="#000" stroke-width="0.3">17:00</text>
<path d="M373.5 1042 V1026.5 H395.5 L400.5 1032.5 L395.5 1038.5 H373.5" fill="#fff" stroke="#000" stroke-width="1"/>
<text x="375" y="1036" font-family='"Liberation Sans", sans-serif' font-size="9.5" fill="#000" textLength="22" lengthAdjust="spacingAndGlyphs" stroke="#000" stroke-width="0.3">18:45</text>
<path d="M401.5 1042 V1026.5 H424.5 L429.5 1032.5 L424.5 1038.5 H401.5" fill="#fff" stroke="#000" stroke-width="1"/>
<text x="403" y="1036" font-family='"Liberation Sans", sans-serif' font-size="9.5" fill="#000" textLength="22" lengthAdjust="spacingAndGlyphs" stroke="#000" stroke-width="0.3">20:30</text>
<path d="M454.5 1042 V1026.5 H478.5 L483.5 1032.5 L478.5 1038.5 H454.5" fill="#fff" stroke="#000" stroke-width="1"/>
<text x="456" y="1036" font-family='"Liberation Sans", sans-serif' font-size="9.5" fill="#000" textLength="22" lengthAdjust="spacingAndGlyphs" stroke="#000" stroke-width="0.3">23:50</text>
<path d="M486.5 1042 V1026.5 H510.5 L515.5 1032.5 L510.5 1038.5 H486.5" fill="#fff" stroke="#000" stroke-width="1"/>
<text x="488" y="1036" font-family='"Liberation Sans", sans-serif' font-size="9.5" fill="#000" textLength="22" lengthAdjust="spacingAndGlyphs" stroke="#000" stroke-width="0.3">01:50</text>
<path d="M649.5 1042 V1026.5 H660.5 L665.5 1032.5 L660.5 1038.5 H649.5" fill="#fff" stroke="#000" stroke-width="1"/>
<text x="651" y="1036" font-family='"Liberation Sans", sans-serif' font-size="9.5" fill="#000" textLength="13" lengthAdjust="spacingAndGlyphs" stroke="#000" stroke-width="0.3">12:</text>
<path d="M665.5 1042 V1026.5 H684.5 L689.5 1032.5 L684.5 1038.5 H665.5" fill="#fff" stroke="#000" stroke-width="1"/>
<text x="667" y="1036" font-family='"Liberation Sans", sans-serif' font-size="9.5" fill="#000" textLength="18" lengthAdjust="spacingAndGlyphs" stroke="#000" stroke-width="0.3">13:0</text>
<path d="M689.5 1042 V1026.5 H710.5 L715.5 1032.5 L710.5 1038.5 H689.5" fill="#fff" stroke="#000" stroke-width="1"/>
<text x="691" y="1036" font-family='"Liberation Sans", sans-serif' font-size="9.5" fill="#000" textLength="22" lengthAdjust="spacingAndGlyphs" stroke="#000" stroke-width="0.3">14:30</text>
<path d="M714.5 1042 V1026.5 H725.5 L730.5 1032.5 L725.5 1038.5 H714.5" fill="#bff0f4" stroke="#000" stroke-width="1"/>
<text x="716" y="1036" font-family='"Liberation Sans", sans-serif' font-size="9.5" fill="#000" textLength="13" lengthAdjust="spacingAndGlyphs" stroke="#000" stroke-width="0.3">:30</text>
<path d="M729.5 1042 V1026.5 H752.5 L757.5 1032.5 L752.5 1038.5 H729.5" fill="#bff0f4" stroke="#000" stroke-width="1"/>
<text x="731" y="1036" font-family='"Liberation Sans", sans-serif' font-size="9.5" fill="#000" textLength="22" lengthAdjust="spacingAndGlyphs" stroke="#000" stroke-width="0.3">17:00</text>
<path d="M761.5 1042 V1026.5 H772.5 L777.5 1032.5 L772.5 1038.5 H761.5" fill="#fff" stroke="#000" stroke-width="1"/>
<text x="763" y="1036" font-family='"Liberation Sans", sans-serif' font-size="9.5" fill="#000" textLength="13" lengthAdjust="spacingAndGlyphs" stroke="#000" stroke-width="0.3">19:</text>
<path d="M777.5 1042 V1026.5 H801.5 L806.5 1032.5 L801.5 1038.5 H777.5" fill="#fff" stroke="#000" stroke-width="1"/>
<text x="779" y="1036" font-family='"Liberation Sans", sans-serif' font-size="9.5" fill="#000" textLength="22" lengthAdjust="spacingAndGlyphs" stroke="#000" stroke-width="0.3">20:00</text>
<path d="M833.5 1042 V1026.5 H857.5 L862.5 1032.5 L857.5 1038.5 H833.5" fill="#fff" stroke="#000" stroke-width="1"/>
<text x="835" y="1036" font-family='"Liberation Sans", sans-serif' font-size="9.5" fill="#000" textLength="22" lengthAdjust="spacingAndGlyphs" stroke="#000" stroke-width="0.3">23:30</text>
<path d="M865.5 1042 V1026.5 H885.5 L890.5 1032.5 L885.5 1038.5 H865.5" fill="#fff" stroke="#000" stroke-width="1"/>
<text x="867" y="1036" font-family='"Liberation Sans", sans-serif' font-size="9.5" fill="#000" textLength="22" lengthAdjust="spacingAndGlyphs" stroke="#000" stroke-width="0.3">01:30</text>
<path d="M890.5 1042 V1026.5 H914.5 L919.5 1032.5 L914.5 1038.5 H890.5" fill="#fff" stroke="#000" stroke-width="1"/>
<text x="892" y="1036" font-family='"Liberation Sans", sans-serif' font-size="9.5" fill="#000" textLength="22" lengthAdjust="spacingAndGlyphs" stroke="#000" stroke-width="0.3">03:07</text>
<path d="M922.5 1042 V1026.5 H945.5 L950.5 1032.5 L945.5 1038.5 H922.5" fill="#fff" stroke="#000" stroke-width="1"/>
<text x="924" y="1036" font-family='"Liberation Sans", sans-serif' font-size="9.5" fill="#000" textLength="22" lengthAdjust="spacingAndGlyphs" stroke="#000" stroke-width="0.3">05:07</text>
<path d="M948.5 1042 V1026.5 H968.5 L973.5 1032.5 L968.5 1038.5 H948.5" fill="#fff" stroke="#000" stroke-width="1"/>
<text x="950" y="1036" font-family='"Liberation Sans", sans-serif' font-size="9.5" fill="#000" textLength="18" lengthAdjust="spacingAndGlyphs" stroke="#000" stroke-width="0.3">6:30</text>
<path d="M977.5 1042 V1026.5 H993.5 L998.5 1032.5 L993.5 1038.5 H977.5" fill="#fff" stroke="#000" stroke-width="1"/>
<text x="979" y="1036" font-family='"Liberation Sans", sans-serif' font-size="9.5" fill="#000" textLength="18" lengthAdjust="spacingAndGlyphs" stroke="#000" stroke-width="0.3">08:3</text>
<path d="M998.5 1042 V1026.5 H1020.5 L1025.5 1032.5 L1020.5 1038.5 H998.5" fill="#bff0f4" stroke="#000" stroke-width="1"/>
<text x="1000" y="1036" font-family='"Liberation Sans", sans-serif' font-size="9.5" fill="#000" textLength="22" lengthAdjust="spacingAndGlyphs" stroke="#000" stroke-width="0.3">09:45</text>
<path d="M1033.5 1042 V1026.5 H1056.5 L1061.5 1032.5 L1056.5 1038.5 H1033.5" fill="#fff" stroke="#000" stroke-width="1"/>
<text x="1035" y="1036" font-family='"Liberation Sans", sans-serif' font-size="9.5" fill="#000" textLength="22" lengthAdjust="spacingAndGlyphs" stroke="#000" stroke-width="0.3">12:00</text>
<path d="M1082.5 1042 V1026.5 H1104.5 L1109.5 1032.5 L1104.5 1038.5 H1082.5" fill="#ffc8d0" stroke="#000" stroke-width="1"/>
<text x="1084" y="1036" font-family='"Liberation Sans", sans-serif' font-size="9.5" fill="#000" textLength="22" lengthAdjust="spacingAndGlyphs" stroke="#000" stroke-width="0.3">15:00</text>
<path d="M1113.5 1042 V1026.5 H1136.5 L1141.5 1032.5 L1136.5 1038.5 H1113.5" fill="#ffc8d0" stroke="#000" stroke-width="1"/>
<text x="1115" y="1036" font-family='"Liberation Sans", sans-serif' font-size="9.5" fill="#000" textLength="22" lengthAdjust="spacingAndGlyphs" stroke="#000" stroke-width="0.3">17:00</text>
<path d="M1139.5 1042 V1026.5 H1153.5 L1158.5 1032.5 L1153.5 1038.5 H1139.5" fill="#fff" stroke="#000" stroke-width="1"/>
<text x="1141" y="1036" font-family='"Liberation Sans", sans-serif' font-size="9.5" fill="#000" textLength="13" lengthAdjust="spacingAndGlyphs" stroke="#000" stroke-width="0.3">:00</text>
<path d="M1161.5 1042 V1026.5 H1185.5 L1190.5 1032.5 L1185.5 1038.5 H1161.5" fill="#fff" stroke="#000" stroke-width="1"/>
<text x="1163" y="1036" font-family='"Liberation Sans", sans-serif' font-size="9.5" fill="#000" textLength="22" lengthAdjust="spacingAndGlyphs" stroke="#000" stroke-width="0.3">20:00</text>
<text class="fitsvg" x="977" y="872" font-family='"Liberation Sans", sans-serif' font-size="11" fill="#d85a5a" style="letter-spacing:-0.4px" textLength="112.00" lengthAdjust="spacingAndGlyphs">[H][JPY] <tspan class="j" style="letter-spacing:3.2px" stroke="#d85a5a" stroke-width="0.45">日銀記者会見</tspan></text>
<text class="fitsvg" x="922" y="886" font-family='"Liberation Sans", sans-serif' font-size="11" fill="#e8a860" style="letter-spacing:-0.4px" textLength="185.00" lengthAdjust="spacingAndGlyphs">[M][JPY] <tspan class="j" style="letter-spacing:3.2px" stroke="#e8a860" stroke-width="0.45">日銀金融政策決定会合発表</tspan></text>
<text class="fitsvg" x="922" y="899" font-family='"Liberation Sans", sans-serif' font-size="11" fill="#e8a860" style="letter-spacing:-0.4px" textLength="126.60" lengthAdjust="spacingAndGlyphs">[M][JPY] <tspan class="j" style="letter-spacing:3.2px" stroke="#e8a860" stroke-width="0.45">日銀展望</tspan><tspan class="j" style="letter-spacing:1.0px" stroke="#e8a860" stroke-width="0.45">レポート</tspan></text>
<text class="fitsvg" x="922" y="912" font-family='"Liberation Sans", sans-serif' font-size="11" fill="#d85a5a" style="letter-spacing:-0.4px" textLength="112.00" lengthAdjust="spacingAndGlyphs">[H][JPY] <tspan class="j" style="letter-spacing:3.2px" stroke="#d85a5a" stroke-width="0.45">日銀金利決定</tspan></text>
<text class="fitsvg" x="865" y="925" font-family='"Liberation Sans", sans-serif' font-size="11" fill="#e8a860" style="letter-spacing:-0.4px" textLength="260.70" lengthAdjust="spacingAndGlyphs">[M][JPY] <tspan class="j" style="letter-spacing:3.2px" stroke="#e8a860" stroke-width="0.45">生鮮食品</tspan><tspan class="j" style="letter-spacing:1.0px" stroke="#e8a860" stroke-width="0.45">を</tspan><tspan class="j" style="letter-spacing:3.2px" stroke="#e8a860" stroke-width="0.45">除</tspan><tspan class="j" style="letter-spacing:1.0px" stroke="#e8a860" stroke-width="0.45">く</tspan><tspan class="j" style="letter-spacing:3.2px" stroke="#e8a860" stroke-width="0.45">全国消費者物価指数前年比</tspan></text>
<text class="fitsvg" x="865" y="938" font-family='"Liberation Sans", sans-serif' font-size="11" fill="#5aae8e" style="letter-spacing:-0.4px" textLength="113.00" lengthAdjust="spacingAndGlyphs">[L][JPY] CPI s.a. <tspan class="j" style="letter-spacing:3.2px" stroke="#5aae8e" stroke-width="0.45">前月比</tspan></text>
<text class="fitsvg" x="865" y="951" font-family='"Liberation Sans", sans-serif' font-size="11" fill="#5aae8e" style="letter-spacing:-0.4px" textLength="90.00" lengthAdjust="spacingAndGlyphs">[L][JPY] CPI<tspan class="j" style="letter-spacing:3.2px" stroke="#5aae8e" stroke-width="0.45">前年比</tspan></text>
<text class="fitsvg" x="865" y="964" font-family='"Liberation Sans", sans-serif' font-size="11" fill="#e8a860" style="letter-spacing:-0.4px" textLength="211.50" lengthAdjust="spacingAndGlyphs">[M][JPY] CPI(<tspan class="j" style="letter-spacing:3.2px" stroke="#e8a860" stroke-width="0.45">食品</tspan><tspan class="j" style="letter-spacing:1.0px" stroke="#e8a860" stroke-width="0.45">とエネルギーを</tspan><tspan class="j" style="letter-spacing:3.2px" stroke="#e8a860" stroke-width="0.45">除</tspan><tspan class="j" style="letter-spacing:1.0px" stroke="#e8a860" stroke-width="0.45">く</tspan>)<tspan class="j" style="letter-spacing:3.2px" stroke="#e8a860" stroke-width="0.45">前年比</tspan></text>
<text class="fitsvg" x="1161" y="872" font-family='"Liberation Sans", sans-serif' font-size="11" fill="#e8a860" style="letter-spacing:-0.4px" textLength="314.00" lengthAdjust="spacingAndGlyphs">[M][USD] <tspan class="j" style="letter-spacing:1.0px" stroke="#e8a860" stroke-width="0.45">ベーカー・ヒューズ</tspan><tspan class="j" style="letter-spacing:3.2px" stroke="#e8a860" stroke-width="0.45">社発表</tspan><tspan class="j" style="letter-spacing:1.0px" stroke="#e8a860" stroke-width="0.45">の</tspan><tspan class="j" style="letter-spacing:3.2px" stroke="#e8a860" stroke-width="0.45">米石油採掘装置</tspan>(<tspan class="j" style="letter-spacing:1.0px" stroke="#e8a860" stroke-width="0.45">リグ</tspan>)<tspan class="j" style="letter-spacing:3.2px" stroke="#e8a860" stroke-width="0.45">稼働数</tspan></text>
<text class="fitsvg" x="1161" y="886" font-family='"Liberation Sans", sans-serif' font-size="11" fill="#e8a860" style="letter-spacing:-0.4px" textLength="318.00" lengthAdjust="spacingAndGlyphs">[M][USD] <tspan class="j" style="letter-spacing:1.0px" stroke="#e8a860" stroke-width="0.45">ベーカー・ヒューズ</tspan><tspan class="j" style="letter-spacing:3.2px" stroke="#e8a860" stroke-width="0.45">社発表</tspan><tspan class="j" style="letter-spacing:1.0px" stroke="#e8a860" stroke-width="0.45">の</tspan><tspan class="j" style="letter-spacing:3.2px" stroke="#e8a860" stroke-width="0.45">米石油採掘装置</tspan>(<tspan class="j" style="letter-spacing:1.0px" stroke="#e8a860" stroke-width="0.45">リグ</tspan>)<tspan class="j" style="letter-spacing:3.2px" stroke="#e8a860" stroke-width="0.45">稼働数</tspan></text>
<text class="fitsvg" x="1114" y="899" font-family='"Liberation Sans", sans-serif' font-size="11" fill="#e8a860" style="letter-spacing:-0.4px" textLength="160.80" lengthAdjust="spacingAndGlyphs">[M][USD] <tspan class="j" style="letter-spacing:1.0px" stroke="#e8a860" stroke-width="0.45">ミシガン</tspan><tspan class="j" style="letter-spacing:3.2px" stroke="#e8a860" stroke-width="0.45">大学期待</tspan><tspan class="j" style="letter-spacing:1.0px" stroke="#e8a860" stroke-width="0.45">インフレ</tspan></text>
<text class="fitsvg" x="1114" y="912" font-family='"Liberation Sans", sans-serif' font-size="11" fill="#e8a860" style="letter-spacing:-0.4px" textLength="191.70" lengthAdjust="spacingAndGlyphs">[M][USD] <tspan class="j" style="letter-spacing:1.0px" stroke="#e8a860" stroke-width="0.45">ミシガン</tspan><tspan class="j" style="letter-spacing:3.2px" stroke="#e8a860" stroke-width="0.45">大学</tspan>5<tspan class="j" style="letter-spacing:3.2px" stroke="#e8a860" stroke-width="0.45">年先期待</tspan><tspan class="j" style="letter-spacing:1.0px" stroke="#e8a860" stroke-width="0.45">インフレ</tspan></text>
<text class="fitsvg" x="1114" y="925" font-family='"Liberation Sans", sans-serif' font-size="11" fill="#e8a860" style="letter-spacing:-0.4px" textLength="150.50" lengthAdjust="spacingAndGlyphs">[M][USD] <tspan class="j" style="letter-spacing:3.2px" stroke="#e8a860" stroke-width="0.45">景気先行指数前月比</tspan></text>
<text class="fitsvg" x="1114" y="938" font-family='"Liberation Sans", sans-serif' font-size="11" fill="#e8a860" style="letter-spacing:-0.4px" textLength="198.00" lengthAdjust="spacingAndGlyphs">[M][USD] <tspan class="j" style="letter-spacing:1.0px" stroke="#e8a860" stroke-width="0.45">ミシガン</tspan><tspan class="j" style="letter-spacing:3.2px" stroke="#e8a860" stroke-width="0.45">大学消費者信頼感指数</tspan></text>
<text class="fitsvg" x="1114" y="951" font-family='"Liberation Sans", sans-serif' font-size="11" fill="#e8a860" style="letter-spacing:-0.4px" textLength="186.50" lengthAdjust="spacingAndGlyphs">[M][USD] <tspan class="j" style="letter-spacing:1.0px" stroke="#e8a860" stroke-width="0.45">ミシガン</tspan><tspan class="j" style="letter-spacing:3.2px" stroke="#e8a860" stroke-width="0.45">大学消費者期待指数</tspan></text>
<text class="fitsvg" x="1114" y="964" font-family='"Liberation Sans", sans-serif' font-size="11" fill="#5aae8e" style="letter-spacing:-0.4px" textLength="135.60" lengthAdjust="spacingAndGlyphs">[L][USD] <tspan class="j" style="letter-spacing:1.0px" stroke="#5aae8e" stroke-width="0.45">ミシガン</tspan><tspan class="j" style="letter-spacing:3.2px" stroke="#5aae8e" stroke-width="0.45">大学現条件</tspan></text>
<text class="fitsvg" x="10" y="504" font-family='"Liberation Sans", sans-serif' font-size="11" fill="#5aae8e" style="letter-spacing:-0.4px" textLength="37.81" lengthAdjust="spacingAndGlyphs">[L][USD]</text>
<text class="fitsvg" x="8" y="517" font-family='"Liberation Sans", sans-serif' font-size="11" fill="#5aae8e" style="letter-spacing:-0.4px" textLength="78.83" lengthAdjust="spacingAndGlyphs">SD] 3<tspan class="j" style="letter-spacing:1.0px" stroke="#5aae8e" stroke-width="0.45">か</tspan><tspan class="j" style="letter-spacing:3.2px" stroke="#5aae8e" stroke-width="0.45">月債入札</tspan></text>
<text class="fitsvg" x="8" y="530" font-family='"Liberation Sans", sans-serif' font-size="11" fill="#5aae8e" style="letter-spacing:-0.4px" textLength="78.83" lengthAdjust="spacingAndGlyphs">SD] 6<tspan class="j" style="letter-spacing:1.0px" stroke="#5aae8e" stroke-width="0.45">か</tspan><tspan class="j" style="letter-spacing:3.2px" stroke="#5aae8e" stroke-width="0.45">月債入札</tspan></text>
<text class="fitsvg" x="594" y="361" font-family='"Liberation Sans", sans-serif' font-size="11" fill="#5aae8e" style="letter-spacing:-0.4px" textLength="22.41" lengthAdjust="spacingAndGlyphs"><tspan class="j" style="letter-spacing:3.2px" stroke="#5aae8e" stroke-width="0.45">外国</tspan></text>
<text x="51" y="24" font-family='"Liberation Sans", sans-serif' font-size="11" fill="#000" textLength="182" lengthAdjust="spacingAndGlyphs" xml:space="preserve">USDJPY, M15:  US Dollar vs Japanese Yen</text>
<rect x="10.5" y="15.5" width="14" height="10" rx="1.5" fill="#fff" stroke="#c85050"/>
<path d="M12 18.5h5M12 20.5h5M12 22.5h5" stroke="#d05050"/>
<path d="M18 18.5h5M18 20.5h5M18 22.5h5" stroke="#3a78c0"/>
<path d="M31.5 25.5V17.5H34.5V19.5H37.5V25.5Z" fill="#fbd8d0" stroke="#c85a50"/>
<path d="M38.5 25.5V17.5H41.5V15.5H44.5V25.5Z" fill="#d0e4f8" stroke="#3a78c0"/>
<rect x="34" y="15" width="5" height="2" fill="#9ab0c8"/>
</svg>

<div id="panel">
  <div id="phead">
    <div class="ht" style="left:9px;color:#6cc88e;letter-spacing:1.5px">07:00</div>
    <div class="ht" style="left:68px;color:#6cc88e;letter-spacing:-0.6px">JPY</div>
    <div class="ht" style="left:110px;color:#6cc88e">[L]</div>
    <div class="ht" style="left:145px;color:#6cc88e"><span class="fit" style="display:inline-block;transform-origin:left center;--i:20;--w:64.81;"><span class="j" style="letter-spacing:3.2px;-webkit-text-stroke:0.45px">先行指数</span></span></div>
    <div class="ht" style="left:351px;color:#fff;font-size:14px"><span class="fit" style="display:inline-block;transform-origin:left center;--i:21;--w:25.00;"><span class="j" style="letter-spacing:1.5px;-webkit-text-stroke:0.45px">あと</span></span></div>
    <div class="ht" style="left:382px;color:#fff">1</div>
    <div class="ht" style="left:392px;color:#fff;font-size:14px"><span class="fit" style="display:inline-block;transform-origin:left center;--i:22;--w:15.00;"><span class="j" style="letter-spacing:4px;-webkit-text-stroke:0.45px">日</span></span></div>
    <div class="ht" style="left:413px;color:#fff;letter-spacing:1.3px">20:54:00</div>
    <div class="pbtn" style="left:496px;top:3px;width:20px;height:16px;background:#4a5468;border-top:1px solid #6a7488;border-left:1px solid #5a6478">-</div>
    <div class="pbtn" style="left:521px;top:3px;width:20px;height:16px;background:#c83c3c;border-top:1px solid #e06868;border-left:1px solid #d05050"><svg class="abs" style="left:5px;top:3px" width="9" height="9"><path d="M0.5 0.5L8.5 8.5M8.5 0.5L0.5 8.5" stroke="#fff" stroke-width="1"/></svg></div>
  </div>
  <div class="btn" style="left:9px;top:34px;width:40px;height:20px;background:#4a9eea;border-color:#4a9eea #8fd0ff #8fd0ff #4a9eea">VIEW</div>
  <div class="btn" style="left:59px;top:34px;width:25px;height:20px;background:#e24c4c;border-color:#e24c4c #ff9a9a #ff9a9a #e24c4c">H</div>
  <div class="btn" style="left:86px;top:34px;width:25px;height:20px;background:#e8a040;border-color:#e8a040 #ffd080 #ffd080 #e8a040">M</div>
  <div class="btn" style="left:113px;top:34px;width:25px;height:20px;background:#46b478;border-color:#46b478 #90e8b0 #90e8b0 #46b478">L</div>
  <div class="btn" style="left:144px;top:34px;width:45px;height:20px;background:#3070b0;border-color:#3070b0 #5a9ad8 #5a9ad8 #3070b0">FOCUS</div>
  <div class="sbox" style="left:276px;top:34px;width:200px;height:20px"></div>
  <div class="btn" style="left:481px;top:34px;width:55px;height:20px;background:#fa9030;border-color:#fa9030 #ffb060 #ffb060 #fa9030">GO</div>
  <div class="btn cb" style="left:9px;top:59px;">ALL</div><div class="btn cb" style="left:59px;top:59px;background:#f08a20;border-color:#f08a20 #f08a20 #ffb060 #f08a20">USD</div><div class="btn cb" style="left:104px;top:59px;">EUR</div><div class="btn cb" style="left:149px;top:59px;background:#f08a20;border-color:#f08a20 #f08a20 #ffb060 #f08a20">JPY</div><div class="btn cb" style="left:194px;top:59px;">GBP</div><div class="btn cb" style="left:239px;top:59px;">AUD</div><div class="btn cb" style="left:284px;top:59px;">CAD</div><div class="btn cb" style="left:329px;top:59px;">CHF</div><div class="btn cb" style="left:374px;top:59px;">NZD</div>
  <div class="colh" style="left:9px">Date</div>
  <div class="colh" style="left:109px">Imp</div>
  <div class="colh" style="left:139px">Cur</div>
  <div class="colh" style="left:179px">Event</div>
  <div class="colh" style="left:409px">Act</div>
  <div class="colh" style="left:475px">Fcst</div>
  <div class="row" style="top:110px;background:#283241;color:#6cc08c"><span style="left:4px">2026.01.26 18:30L</span><span style="left:134px">USD</span><span style="left:174px"><span class="fit" style="display:inline-block;transform-origin:left center;--i:0;--w:67.00;">3<span class="j" style="letter-spacing:2.1px;-webkit-text-stroke:0.45px">か</span><span class="j" style="letter-spacing:2.3px;-webkit-text-stroke:0.45px">月債入札</span></span></span><span style="left:404px">-</span><span style="left:469px">-</span></div><div class="row" style="top:132px;background:#283241;color:#e8606a"><span style="left:4px">2026.01.26 15:30H</span><span style="left:134px">USD</span><span style="left:174px"><span class="fit" style="display:inline-block;transform-origin:left center;--i:1;--w:95.70;"><span class="j" style="letter-spacing:2.3px;-webkit-text-stroke:0.45px">耐久財受注前月比</span></span></span><span style="left:404px">-</span><span style="left:469px">6.80</span></div><div class="row" style="top:154px;background:#283241;color:#eeb060"><span style="left:4px">2026.01.26 15:30M</span><span style="left:134px">USD</span><span style="left:174px"><span class="fit" style="display:inline-block;transform-origin:left center;--i:2;--w:155.80;"><span class="j" style="letter-spacing:2.3px;-webkit-text-stroke:0.45px">輸送</span><span class="j" style="letter-spacing:2.1px;-webkit-text-stroke:0.45px">を</span><span class="j" style="letter-spacing:2.3px;-webkit-text-stroke:0.45px">除</span><span class="j" style="letter-spacing:2.1px;-webkit-text-stroke:0.45px">く</span><span class="j" style="letter-spacing:2.3px;-webkit-text-stroke:0.45px">耐久財受注前月比</span></span></span><span style="left:404px">-</span><span style="left:469px">0.30</span></div><div class="row" style="top:176px;background:#283241;color:#6cc08c"><span style="left:4px">2026.01.26 15:30L</span><span style="left:134px">USD</span><span style="left:174px"><span class="fit" style="display:inline-block;transform-origin:left center;--i:3;--w:155.80;"><span class="j" style="letter-spacing:2.3px;-webkit-text-stroke:0.45px">防衛</span><span class="j" style="letter-spacing:2.1px;-webkit-text-stroke:0.45px">を</span><span class="j" style="letter-spacing:2.3px;-webkit-text-stroke:0.45px">除</span><span class="j" style="letter-spacing:2.1px;-webkit-text-stroke:0.45px">く</span><span class="j" style="letter-spacing:2.3px;-webkit-text-stroke:0.45px">耐久財受注前月比</span></span></span><span style="left:404px">-</span><span style="left:469px">2.00</span></div><div class="row" style="top:198px;background:#283241;color:#6cc08c"><span style="left:4px">2026.01.26 15:30L</span><span style="left:134px">USD</span><span style="left:174px"><span class="fit" style="display:inline-block;transform-origin:left center;--i:4;--w:203.00;"><span class="j" style="letter-spacing:2.3px;-webkit-text-stroke:0.45px">航空機</span><span class="j" style="letter-spacing:2.1px;-webkit-text-stroke:0.45px">を</span><span class="j" style="letter-spacing:2.3px;-webkit-text-stroke:0.45px">除</span><span class="j" style="letter-spacing:2.1px;-webkit-text-stroke:0.45px">く</span><span class="j" style="letter-spacing:2.3px;-webkit-text-stroke:0.45px">非防衛資本財受注前月比</span></span></span><span style="left:404px">-</span><span style="left:469px">0.00</span></div><div class="row" style="top:220px;background:#283241;color:#6cc08c"><span style="left:4px">2026.01.26 15:30L</span><span style="left:134px">USD</span><span style="left:174px"><span class="fit" style="display:inline-block;transform-origin:left center;--i:5;--w:213.00;"><span class="j" style="letter-spacing:2.3px;-webkit-text-stroke:0.45px">非防衛資本財受注</span>(<span class="j" style="letter-spacing:2.3px;-webkit-text-stroke:0.45px">航空機</span><span class="j" style="letter-spacing:2.1px;-webkit-text-stroke:0.45px">を</span><span class="j" style="letter-spacing:2.3px;-webkit-text-stroke:0.45px">除</span><span class="j" style="letter-spacing:2.1px;-webkit-text-stroke:0.45px">く</span>)<span class="j" style="letter-spacing:2.3px;-webkit-text-stroke:0.45px">前月比</span></span></span><span style="left:404px">-</span><span style="left:469px">0.50</span></div><div class="row" style="top:242px;background:#283241;color:#6cc08c"><span style="left:4px">2026.01.26 07:00L</span><span style="left:134px">JPY</span><span style="left:174px"><span class="fit" style="display:inline-block;transform-origin:left center;--i:6;--w:48.00;"><span class="j" style="letter-spacing:2.3px;-webkit-text-stroke:0.45px">先行指数</span></span></span><span style="left:404px">-</span><span style="left:469px">110.50</span></div><div class="row" style="top:264px;background:#283241;color:#6cc08c"><span style="left:4px">2026.01.26 07:00L</span><span style="left:134px">JPY</span><span style="left:174px"><span class="fit" style="display:inline-block;transform-origin:left center;--i:7;--w:83.30;"><span class="j" style="letter-spacing:2.3px;-webkit-text-stroke:0.45px">一致指数前月比</span></span></span><span style="left:404px">-</span><span style="left:469px">-</span></div><div class="row" style="top:286px;background:#283241;color:#6cc08c"><span style="left:4px">2026.01.26 07:00L</span><span style="left:134px">JPY</span><span style="left:174px"><span class="fit" style="display:inline-block;transform-origin:left center;--i:8;--w:83.30;"><span class="j" style="letter-spacing:2.3px;-webkit-text-stroke:0.45px">先行指標前月比</span></span></span><span style="left:404px">-</span><span style="left:469px">-</span></div><div class="row" style="top:308px;background:#add8e6;color:#1a1a1a"><span style="left:4px">2026.01.26 07:00L</span><span style="left:134px">JPY</span><span style="left:174px"><span class="fit" style="display:inline-block;transform-origin:left center;--i:9;--w:162.00;"><span class="j" style="letter-spacing:2.3px;-webkit-text-stroke:0.45px">一致指数</span><span class="j" style="letter-spacing:2.1px;-webkit-text-stroke:0.45px">（</span>Coincident Index<span class="j" style="letter-spacing:2.1px;-webkit-text-stroke:0.45px">）</span></span></span><span style="left:404px">-</span><span style="left:469px">115.20</span></div><div class="row" style="top:330px;background:#713c0a;color:#f0a84a"><span style="left:4px">2026.01.23 20:00M</span><span style="left:134px">USD</span><span style="left:174px"><span class="fit" style="display:inline-block;transform-origin:left center;--i:10;--w:286.00;"><span class="j" style="letter-spacing:2.1px;-webkit-text-stroke:0.45px">ベーカー・ヒューズ</span><span class="j" style="letter-spacing:2.3px;-webkit-text-stroke:0.45px">社発表</span><span class="j" style="letter-spacing:2.1px;-webkit-text-stroke:0.45px">の</span><span class="j" style="letter-spacing:2.3px;-webkit-text-stroke:0.45px">米石油採掘装置</span>(<span class="j" style="letter-spacing:2.1px;-webkit-text-stroke:0.45px">リグ</span>)<span class="j" style="letter-spacing:2.3px;-webkit-text-stroke:0.45px">稼</span></span></span><span style="left:404px"></span><span style="left:469px">-</span></div><div class="row" style="top:352px;background:#713c0a;color:#f0a84a"><span style="left:4px">2026.01.23 20:00M</span><span style="left:134px">USD</span><span style="left:174px"><span class="fit" style="display:inline-block;transform-origin:left center;--i:11;--w:300.00;"><span class="j" style="letter-spacing:2.1px;-webkit-text-stroke:0.45px">ベーカー・ヒューズ</span><span class="j" style="letter-spacing:2.3px;-webkit-text-stroke:0.45px">社発表</span><span class="j" style="letter-spacing:2.1px;-webkit-text-stroke:0.45px">の</span><span class="j" style="letter-spacing:2.3px;-webkit-text-stroke:0.45px">米石油採掘装置</span><span class="j" style="letter-spacing:2.1px;-webkit-text-stroke:0.45px">（リグ）</span><span class="j" style="letter-spacing:2.3px;-webkit-text-stroke:0.45px">稼</span></span></span><span style="left:404px"></span><span style="left:469px"></span></div><div class="row" style="top:374px;background:#283241;color:#eeb060"><span style="left:4px">2026.01.23 17:00M</span><span style="left:134px">USD</span><span style="left:174px"><span class="fit" style="display:inline-block;transform-origin:left center;--i:12;--w:143.40;"><span class="j" style="letter-spacing:2.1px;-webkit-text-stroke:0.45px">ミシガン</span><span class="j" style="letter-spacing:2.3px;-webkit-text-stroke:0.45px">大学期待</span><span class="j" style="letter-spacing:2.1px;-webkit-text-stroke:0.45px">インフレ</span></span></span><span style="left:404px">4.00</span><span style="left:469px">4.20</span></div><div class="row" style="top:396px;background:#283241;color:#eeb060"><span style="left:4px">2026.01.23 17:00M</span><span style="left:134px">USD</span><span style="left:174px"><span class="fit" style="display:inline-block;transform-origin:left center;--i:13;--w:175.00;"><span class="j" style="letter-spacing:2.1px;-webkit-text-stroke:0.45px">ミシガン</span><span class="j" style="letter-spacing:2.3px;-webkit-text-stroke:0.45px">大学</span>5<span class="j" style="letter-spacing:2.3px;-webkit-text-stroke:0.45px">年先期待</span><span class="j" style="letter-spacing:2.1px;-webkit-text-stroke:0.45px">インフレ</span></span></span><span style="left:404px">3.30</span><span style="left:469px">3.40</span></div><div class="row" style="top:418px;background:#283241;color:#eeb060"><span style="left:4px">2026.01.23 17:00M</span><span style="left:134px">USD</span><span style="left:174px"><span class="fit" style="display:inline-block;transform-origin:left center;--i:14;--w:108.00;"><span class="j" style="letter-spacing:2.3px;-webkit-text-stroke:0.45px">景気先行指数前月比</span></span></span><span style="left:404px">-0.30</span><span style="left:469px">-0.50</span></div><div class="row" style="top:440px;background:#283241;color:#eeb060"><span style="left:4px">2026.01.23 17:00M</span><span style="left:134px">USD</span><span style="left:174px"><span class="fit" style="display:inline-block;transform-origin:left center;--i:15;--w:168.20;"><span class="j" style="letter-spacing:2.1px;-webkit-text-stroke:0.45px">ミシガン</span><span class="j" style="letter-spacing:2.3px;-webkit-text-stroke:0.45px">大学消費者信頼感指数</span></span></span><span style="left:404px">56.40</span><span style="left:469px">54.00</span></div><div class="row" style="top:462px;background:#283241;color:#eeb060"><span style="left:4px">2026.01.23 17:00M</span><span style="left:134px">USD</span><span style="left:174px"><span class="fit" style="display:inline-block;transform-origin:left center;--i:16;--w:155.80;"><span class="j" style="letter-spacing:2.1px;-webkit-text-stroke:0.45px">ミシガン</span><span class="j" style="letter-spacing:2.3px;-webkit-text-stroke:0.45px">大学消費者期待指数</span></span></span><span style="left:404px">57.00</span><span style="left:469px">55.00</span></div><div class="row" style="top:484px;background:#283241;color:#6cc08c"><span style="left:4px">2026.01.23 17:00L</span><span style="left:134px">USD</span><span style="left:174px"><span class="fit" style="display:inline-block;transform-origin:left center;--i:17;--w:108.00;"><span class="j" style="letter-spacing:2.1px;-webkit-text-stroke:0.45px">ミシガン</span><span class="j" style="letter-spacing:2.3px;-webkit-text-stroke:0.45px">大学現条件</span></span></span><span style="left:404px">55.40</span><span style="left:469px">52.40</span></div><div class="row" style="top:506px;background:#283241;color:#e8606a"><span style="left:4px">2026.01.23 08:30H</span><span style="left:134px">JPY</span><span style="left:174px"><span class="fit" style="display:inline-block;transform-origin:left center;--i:18;--w:71.70;"><span class="j" style="letter-spacing:2.3px;-webkit-text-stroke:0.45px">日銀記者会見</span></span></span><span style="left:404px">-</span><span style="left:469px">-</span></div><div class="row" style="top:528px;background:#283241;color:#eeb060"><span style="left:4px">2026.01.23 05:07M</span><span style="left:134px">JPY</span><span style="left:174px"><span class="fit" style="display:inline-block;transform-origin:left center;--i:19;--w:143.40;"><span class="j" style="letter-spacing:2.3px;-webkit-text-stroke:0.45px">日銀金融政策決定会合発表</span></span></span><span style="left:404px">-</span><span style="left:469px">-</span></div>
  <div id="sbar"><div id="sthumb"></div></div>
  <div id="status">Search Ready - Total: 1317 (View: 263-282)</div>
</div>


<div id="dlg1" class="dlg">
  <div class="dtitle" style="height:30px">
    <span class="dico" style="left:10px;top:9px"><svg width="14" height="12" viewBox="0 0 14 12"><path d="M0.5 10.5 L12.5 0.5" stroke="#3cb050" stroke-width="1.2" stroke-dasharray="2 1.5" fill="none"/><path d="M1.8 7 C3 3, 4 1.5, 5 3 S7.5 10, 9 8.5 S11.5 3, 12.2 2" stroke="#2c5f8e" stroke-width="1.3" fill="none"/></svg></span>
    <span class="dtt" style="left:30px;top:7px"><span class="fit" style="display:inline-block;transform-origin:left center;--i:23;--w:176.27;"><span class="j" style="letter-spacing:2.5px;-webkit-text-stroke:0.45px">表示中</span><span class="j" style="letter-spacing:-0.3px;-webkit-text-stroke:0.45px">のインディケータ</span> USDJPY,M15</span></span>
    <span class="dtt" style="left:346px;top:6px;color:#707070;font-size:14px">?</span>
    <svg class="abs" style="left:390px;top:8px" width="12" height="12"><path d="M1 1L11 11M11 1L1 11" stroke="#505050" stroke-width="1.1"/></svg>
  </div>
  <div class="tree" style="left:8px;top:38px;width:308px;height:259px">
    <svg class="abs" style="left:8px;top:8px" width="10" height="7"><path d="M1 1L4.6 4.6L8.2 1" stroke="#202020" stroke-width="1.5" fill="none"/></svg>
    <div class="abs" style="left:23px;top:11px;width:1px;height:1px;background:#606060"></div>
    <svg class="abs" style="left:27px;top:3px" width="16" height="16"><path d="M0.5 0V14.5H15" stroke="#8a8a8a" fill="none"/><path d="M2.2 7.6 L5.2 3.9 L9.4 8.7 L13.9 4.2" stroke="#3070b0" stroke-width="1.2" fill="none" stroke-linejoin="miter"/></svg>
    <div class="tt" style="left:48px;top:3px"><span class="fit" style="display:inline-block;transform-origin:left center;--i:24;--w:60.91;"><span class="j" style="letter-spacing:-0.3px;-webkit-text-stroke:0.45px">メインチャート</span></span></div>
    <svg class="abs" style="left:34px;top:21px" width="12" height="32"><g fill="#505050"><rect x="0" y="0" width="1" height="1"/><rect x="0" y="2" width="1" height="1"/><rect x="0" y="4" width="1" height="1"/><rect x="0" y="6" width="1" height="1"/><rect x="0" y="8" width="1" height="1"/><rect x="0" y="10" width="1" height="1"/><rect x="0" y="12" width="1" height="1"/><rect x="0" y="14" width="1" height="1"/><rect x="0" y="16" width="1" height="1"/><rect x="0" y="18" width="1" height="1"/><rect x="0" y="20" width="1" height="1"/><rect x="0" y="22" width="1" height="1"/><rect x="0" y="24" width="1" height="1"/><rect x="0" y="26" width="1" height="1"/><rect x="0" y="28" width="1" height="1"/><rect x="0" y="30" width="1" height="1"/><rect x="0" y="10" width="1" height="1"/><rect x="2" y="10" width="1" height="1"/><rect x="4" y="10" width="1" height="1"/><rect x="6" y="10" width="1" height="1"/><rect x="8" y="10" width="1" height="1"/><rect x="10" y="10" width="1" height="1"/><rect x="0" y="30" width="1" height="1"/><rect x="2" y="30" width="1" height="1"/><rect x="4" y="30" width="1" height="1"/><rect x="6" y="30" width="1" height="1"/><rect x="8" y="30" width="1" height="1"/><rect x="10" y="30" width="1" height="1"/></g></svg>
    <div class="abs" style="left:44px;top:21px;width:172px;height:20px;background:#d9d9d9;border-radius:3px"></div>
    <span class="dico" style="left:49px;top:25px"><svg width="14" height="12" viewBox="0 0 14 12"><path d="M0.5 10.5 L12.5 0.5" stroke="#3cb050" stroke-width="1.2" stroke-dasharray="2 1.5" fill="none"/><path d="M1.8 7 C3 3, 4 1.5, 5 3 S7.5 10, 9 8.5 S11.5 3, 12.2 2" stroke="#2c5f8e" stroke-width="1.3" fill="none"/></svg></span>
    <div class="tt" style="left:68px;top:23px">SmartCalendar_HistoryViewer</div>
    <span class="dico" style="left:49px;top:45px"><svg width="14" height="12" viewBox="0 0 14 12"><path d="M0.5 10.5 L12.5 0.5" stroke="#3cb050" stroke-width="1.2" stroke-dasharray="2 1.5" fill="none"/><path d="M1.8 7 C3 3, 4 1.5, 5 3 S7.5 10, 9 8.5 S11.5 3, 12.2 2" stroke="#2c5f8e" stroke-width="1.3" fill="none"/></svg></span>
    <div class="tt" style="left:69px;top:43px">trading_sessions_rectangles</div>
  </div>
  <div class="wbtn" style="left:324px;top:39px;width:87px;height:21px"><span class="fit" style="display:inline-block;transform-origin:center center;--i:25;--w:43.52;"><span class="j" style="letter-spacing:-0.3px;-webkit-text-stroke:0.45px">プロパティ</span></span></div>
  <div class="wbtn" style="left:324px;top:67px;width:87px;height:21px"><span class="fit" style="display:inline-block;transform-origin:center center;--i:26;--w:23.00;"><span class="j" style="letter-spacing:2.5px;-webkit-text-stroke:0.45px">削除</span></span></div>
  <div class="wbtn" style="left:324px;top:276px;width:87px;height:21px"><span class="fit" style="display:inline-block;transform-origin:center center;--i:27;--w:30.30;"><span class="j" style="letter-spacing:2.5px;-webkit-text-stroke:0.45px">閉</span><span class="j" style="letter-spacing:-0.3px;-webkit-text-stroke:0.45px">じる</span></span></div>
</div>


<div id="dlg2" class="dlg">
  <div class="dtitle" style="height:38px">
    <span class="dtt" style="left:9px;top:7px">SmartCalendar_HistoryViewer 1.00</span>
    <div class="abs" style="left:593px;top:14px;width:11px;height:1px;background:#606060"></div>
    <div class="abs" style="left:638px;top:9px;width:10px;height:10px;border:1px solid #c8c8c8"></div>
    <svg class="abs" style="left:684px;top:8px" width="12" height="12"><path d="M1 1L11 11M11 1L1 11" stroke="#505050" stroke-width="1.1"/></svg>
  </div>
  <div class="abs" style="left:7px;top:38px;width:701px;height:272px;background:#fff">
    <div class="tab" style="left:14px"><span class="fit" style="display:inline-block;transform-origin:left center;--i:38;--w:22.00;"><span class="j" style="letter-spacing:2.5px;-webkit-text-stroke:0.45px">共有</span></span></div>
    <div class="tab" style="left:56px"><span class="fit" style="display:inline-block;transform-origin:left center;--i:39;--w:42.00;"><span class="j" style="letter-spacing:-0.3px;-webkit-text-stroke:0.45px">インプット</span></span></div>
    <div class="abs" style="left:56px;top:20px;width:42px;height:2px;background:#1a6fc0"></div>
    <div class="tab" style="left:115px"><span class="fit" style="display:inline-block;transform-origin:left center;--i:40;--w:24.00;"><span class="j" style="letter-spacing:-0.3px;-webkit-text-stroke:0.45px">カラー</span></span></div>
    <div class="tab" style="left:158px"><span class="fit" style="display:inline-block;transform-origin:left center;--i:41;--w:46.00;"><span class="j" style="letter-spacing:2.5px;-webkit-text-stroke:0.45px">表示選択</span></span></div>
    <div id="ptable">
      <div class="abs pt" style="left:7px;top:5px"><span class="fit" style="display:inline-block;transform-origin:left center;--i:42;--w:34.50;"><span class="j" style="letter-spacing:2.5px;-webkit-text-stroke:0.45px">変数名</span></span></div>
      <div class="abs" style="left:261px;top:0;width:1px;height:26px;background:#d0d0d0"></div>
      <div class="abs pt" style="left:269px;top:5px"><span class="fit" style="display:inline-block;transform-origin:left center;--i:43;--w:11.50;"><span class="j" style="letter-spacing:2.5px;-webkit-text-stroke:0.45px">値</span></span></div>
      <div class="prow" style="top:24px;height:19px;background:#ebebeb"><svg class="abs" style="left:6px;top:5px" width="11" height="11"><circle cx="5.5" cy="3" r="2.3" fill="none" stroke="#e05050" stroke-width="1.2"/><circle cx="3" cy="7.5" r="2.3" fill="none" stroke="#40a040" stroke-width="1.2"/><circle cx="8" cy="7.5" r="2.3" fill="none" stroke="#3070d0" stroke-width="1.2"/></svg><div class="abs pt" style="left:22px"><span class="fit" style="display:inline-block;transform-origin:left center;--i:28;--w:69.31;"><span class="j" style="letter-spacing:-0.3px;-webkit-text-stroke:0.45px">ヘッダー</span><span class="j" style="letter-spacing:2.5px;-webkit-text-stroke:0.45px">背景色</span></span></div><div class="abs" style="left:261px;top:0;width:1px;height:20px;background:#d0d0d0"></div><div class="abs" style="left:265px;top:4px;width:11px;height:11px;background:#232d3c;border:1px solid #a0a0a0"></div><div class="abs pt" style="left:281px">35,45,60</div></div><div class="prow" style="top:44px;height:19px;background:#ffffff"><svg class="abs" style="left:6px;top:5px" width="11" height="11"><circle cx="5.5" cy="3" r="2.3" fill="none" stroke="#e05050" stroke-width="1.2"/><circle cx="3" cy="7.5" r="2.3" fill="none" stroke="#40a040" stroke-width="1.2"/><circle cx="8" cy="7.5" r="2.3" fill="none" stroke="#3070d0" stroke-width="1.2"/></svg><div class="abs pt" style="left:22px"><span class="fit" style="display:inline-block;transform-origin:left center;--i:29;--w:60.61;"><span class="j" style="letter-spacing:-0.3px;-webkit-text-stroke:0.45px">リスト</span><span class="j" style="letter-spacing:2.5px;-webkit-text-stroke:0.45px">背景色</span></span></div><div class="abs" style="left:261px;top:0;width:1px;height:20px;background:#d0d0d0"></div><div class="abs" style="left:265px;top:4px;width:11px;height:11px;background:#19202d;border:1px solid #a0a0a0"></div><div class="abs pt" style="left:281px">25,32,45</div></div><div class="prow" style="top:64px;height:19px;background:#ebebeb"><svg class="abs" style="left:6px;top:5px" width="11" height="11"><circle cx="5.5" cy="3" r="2.3" fill="none" stroke="#e05050" stroke-width="1.2"/><circle cx="3" cy="7.5" r="2.3" fill="none" stroke="#40a040" stroke-width="1.2"/><circle cx="8" cy="7.5" r="2.3" fill="none" stroke="#3070d0" stroke-width="1.2"/></svg><div class="abs pt" style="left:22px"><span class="fit" style="display:inline-block;transform-origin:left center;--i:30;--w:69.31;"><span class="j" style="letter-spacing:2.5px;-webkit-text-stroke:0.45px">基本</span><span class="j" style="letter-spacing:-0.3px;-webkit-text-stroke:0.45px">テキスト</span><span class="j" style="letter-spacing:2.5px;-webkit-text-stroke:0.45px">色</span></span></div><div class="abs" style="left:261px;top:0;width:1px;height:20px;background:#d0d0d0"></div><div class="abs" style="left:265px;top:4px;width:11px;height:11px;background:#dcdce6;border:1px solid #a0a0a0"></div><div class="abs pt" style="left:281px">220,220,230</div></div><div class="prow" style="top:84px;height:19px;background:#ffffff"><svg class="abs" style="left:6px;top:5px" width="11" height="11"><circle cx="5.5" cy="3" r="2.3" fill="none" stroke="#e05050" stroke-width="1.2"/><circle cx="3" cy="7.5" r="2.3" fill="none" stroke="#40a040" stroke-width="1.2"/><circle cx="8" cy="7.5" r="2.3" fill="none" stroke="#3070d0" stroke-width="1.2"/></svg><div class="abs pt" style="left:22px"><span class="fit" style="display:inline-block;transform-origin:left center;--i:31;--w:110.03;"><span class="j" style="letter-spacing:-0.3px;-webkit-text-stroke:0.45px">アクセント</span><span class="j" style="letter-spacing:2.5px;-webkit-text-stroke:0.45px">色</span><span class="j" style="letter-spacing:-0.3px;-webkit-text-stroke:0.45px">（ボタン</span><span class="j" style="letter-spacing:2.5px;-webkit-text-stroke:0.45px">等</span><span class="j" style="letter-spacing:-0.3px;-webkit-text-stroke:0.45px">）</span></span></div><div class="abs" style="left:261px;top:0;width:1px;height:20px;background:#d0d0d0"></div><div class="abs" style="left:265px;top:4px;width:11px;height:11px;background:#ff9632;border:1px solid #a0a0a0"></div><div class="abs pt" style="left:281px">255,150,50</div></div><div class="prow" style="top:104px;height:19px;background:#ebebeb"><svg class="abs" style="left:6px;top:5px" width="11" height="11"><circle cx="5.5" cy="3" r="2.3" fill="none" stroke="#e05050" stroke-width="1.2"/><circle cx="3" cy="7.5" r="2.3" fill="none" stroke="#40a040" stroke-width="1.2"/><circle cx="8" cy="7.5" r="2.3" fill="none" stroke="#3070d0" stroke-width="1.2"/></svg><div class="abs pt" style="left:22px"><span class="fit" style="display:inline-block;transform-origin:left center;--i:32;--w:109.72;"><span class="j" style="letter-spacing:-0.3px;-webkit-text-stroke:0.45px">リスト</span><span class="j" style="letter-spacing:2.5px;-webkit-text-stroke:0.45px">行</span><span class="j" style="letter-spacing:-0.3px;-webkit-text-stroke:0.45px">の</span><span class="j" style="letter-spacing:2.5px;-webkit-text-stroke:0.45px">色</span><span class="j" style="letter-spacing:-0.3px;-webkit-text-stroke:0.45px">（</span><span class="j" style="letter-spacing:2.5px;-webkit-text-stroke:0.45px">偶数行</span><span class="j" style="letter-spacing:-0.3px;-webkit-text-stroke:0.45px">）</span></span></div><div class="abs" style="left:261px;top:0;width:1px;height:20px;background:#d0d0d0"></div><div class="abs" style="left:265px;top:4px;width:11px;height:11px;background:#283241;border:1px solid #a0a0a0"></div><div class="abs pt" style="left:281px">40,50,65</div></div><div class="prow" style="top:124px;height:19px;background:#ffffff"><svg class="abs" style="left:6px;top:5px" width="11" height="11"><circle cx="5.5" cy="3" r="2.3" fill="none" stroke="#e05050" stroke-width="1.2"/><circle cx="3" cy="7.5" r="2.3" fill="none" stroke="#40a040" stroke-width="1.2"/><circle cx="8" cy="7.5" r="2.3" fill="none" stroke="#3070d0" stroke-width="1.2"/></svg><div class="abs pt" style="left:22px"><span class="fit" style="display:inline-block;transform-origin:left center;--i:33;--w:98.20;"><span class="j" style="letter-spacing:2.5px;-webkit-text-stroke:0.45px">選択時</span><span class="j" style="letter-spacing:-0.3px;-webkit-text-stroke:0.45px">のハイライト</span><span class="j" style="letter-spacing:2.5px;-webkit-text-stroke:0.45px">色</span></span></div><div class="abs" style="left:261px;top:0;width:1px;height:20px;background:#d0d0d0"></div><div class="abs" style="left:265px;top:4px;width:11px;height:11px;background:#add8e6;border:1px solid #a0a0a0"></div><div class="abs pt" style="left:281px">LightBlue</div></div><div class="prow" style="top:144px;height:19px;background:#ebebeb"><span class="abs" style="left:5px;top:3px;font-size:10px;color:#2a70b8">01</span><div class="abs pt" style="left:22px"><span class="fit" style="display:inline-block;transform-origin:left center;--i:34;--w:129.20;"><span class="j" style="letter-spacing:2.5px;-webkit-text-stroke:0.45px">選択時</span><span class="j" style="letter-spacing:-0.3px;-webkit-text-stroke:0.45px">のハイライト</span><span class="j" style="letter-spacing:2.5px;-webkit-text-stroke:0.45px">幅</span>(<span class="j" style="letter-spacing:2.5px;-webkit-text-stroke:0.45px">倍率</span>)</span></div><div class="abs" style="left:261px;top:0;width:1px;height:20px;background:#d0d0d0"></div><div class="abs pt" style="left:265px">5</div></div><div class="prow" style="top:164px;height:19px;background:#ffffff"><span class="abs" style="left:5px;top:2px;font-size:11px;color:#c09030">ab</span><div class="abs pt" style="left:22px"><span class="fit" style="display:inline-block;transform-origin:left center;--i:35;--w:104.12;"><span class="j" style="letter-spacing:-0.3px;-webkit-text-stroke:0.45px">アラート</span><span class="j" style="letter-spacing:2.5px;-webkit-text-stroke:0.45px">音源</span><span class="j" style="letter-spacing:-0.3px;-webkit-text-stroke:0.45px">ファイル</span><span class="j" style="letter-spacing:2.5px;-webkit-text-stroke:0.45px">名</span></span></div><div class="abs" style="left:261px;top:0;width:1px;height:20px;background:#d0d0d0"></div><div class="abs pt" style="left:265px">connect.wav</div></div><div class="prow" style="top:184px;height:19px;background:#ebebeb"><div class="abs pt" style="left:2px"><span class="fit" style="display:inline-block;transform-origin:left center;--i:36;--w:89.52;"><span class="j" style="letter-spacing:-0.3px;-webkit-text-stroke:0.45px">【データ</span><span class="j" style="letter-spacing:2.5px;-webkit-text-stroke:0.45px">取得設定</span><span class="j" style="letter-spacing:-0.3px;-webkit-text-stroke:0.45px">】</span></span></div><div class="abs" style="left:261px;top:0;width:1px;height:20px;background:#d0d0d0"></div><div class="abs pt" style="left:265px"></div></div><div class="prow" style="top:204px;height:15px;background:#ffffff"><span class="abs" style="left:5px;top:3px;font-size:10px;color:#2a70b8">01</span><div class="abs pt" style="left:22px"><span class="fit" style="display:inline-block;transform-origin:left center;--i:37;--w:103.81;"><span class="j" style="letter-spacing:2.5px;-webkit-text-stroke:0.45px">過去</span><span class="j" style="letter-spacing:-0.3px;-webkit-text-stroke:0.45px">データの</span><span class="j" style="letter-spacing:2.5px;-webkit-text-stroke:0.45px">取得日数</span></span></div><div class="abs" style="left:261px;top:0;width:1px;height:20px;background:#d0d0d0"></div><div class="abs pt" style="left:265px">90</div></div>
      <div class="abs" style="left:524px;top:0;width:17px;height:220px;background:#f0f0f0"></div>
      <div class="abs" style="left:531px;top:32px;width:2px;height:127px;background:#8a8a8a;border-radius:1px"></div>
    </div>
    <div class="wbtn" style="left:565px;top:193px;width:120px;height:23px"><span class="fit" style="display:inline-block;transform-origin:center center;--i:44;--w:58.41;"><span class="j" style="letter-spacing:2.5px;-webkit-text-stroke:0.45px">読</span><span class="j" style="letter-spacing:-0.3px;-webkit-text-stroke:0.45px">み</span><span class="j" style="letter-spacing:2.5px;-webkit-text-stroke:0.45px">込</span><span class="j" style="letter-spacing:-0.3px;-webkit-text-stroke:0.45px">み</span> (L)</span></div>
    <div class="wbtn" style="left:565px;top:228px;width:120px;height:23px"><span class="fit" style="display:inline-block;transform-origin:center center;--i:45;--w:42.00;"><span class="j" style="letter-spacing:2.5px;-webkit-text-stroke:0.45px">保存</span> (S)</span></div>
  </div>
  <div class="wbtn" style="left:429px;top:318px;width:85px;height:23px">OK</div>
  <div class="wbtn" style="left:522px;top:318px;width:85px;height:23px"><span class="fit" style="display:inline-block;transform-origin:center center;--i:46;--w:43.52;"><span class="j" style="letter-spacing:-0.3px;-webkit-text-stroke:0.45px">キャンセル</span></span></div>
  <div class="wbtn" style="left:615px;top:318px;width:85px;height:23px"><span class="fit" style="display:inline-block;transform-origin:center center;--i:47;--w:34.81;"><span class="j" style="letter-spacing:-0.3px;-webkit-text-stroke:0.45px">リセット</span></span></div>
  <div class="abs" style="left:697px;top:335px;width:16px;height:16px;background:#fff"></div>
  <svg class="abs" style="left:701px;top:339px" width="10" height="10"><g fill="#8a8a8a"><rect x="6" y="0" width="2" height="2"/><rect x="3" y="3" width="2" height="2"/><rect x="6" y="3" width="2" height="2"/><rect x="0" y="6" width="2" height="2"/><rect x="3" y="6" width="2" height="2"/><rect x="6" y="6" width="2" height="2"/></g></svg>
</div>

<script>
(function(){
  var t=document.createElement('span');
  t.style.cssText='position:absolute;left:-9999px;top:0;font-size:100px;font-family:"Liberation Sans",sans-serif;white-space:nowrap';
  t.textContent='日本';
  document.body.appendChild(t);
  var w=t.getBoundingClientRect().width;
  document.body.removeChild(t);
  if(Math.abs(w-150)>3){document.body.classList.add('cjk');}
  var els=document.querySelectorAll('.fit');
  for(var i=0;i<els.length;i++){
    var e=els[i];
    var w0=parseFloat(e.style.getPropertyValue('--w'));
    var n=e.getBoundingClientRect().width;
    if(w0>0&&n>0&&Math.abs(n-w0)>0.5){e.style.transform='scaleX('+(w0/n).toFixed(4)+')';}
  }
})();
</script>
</body></html>
